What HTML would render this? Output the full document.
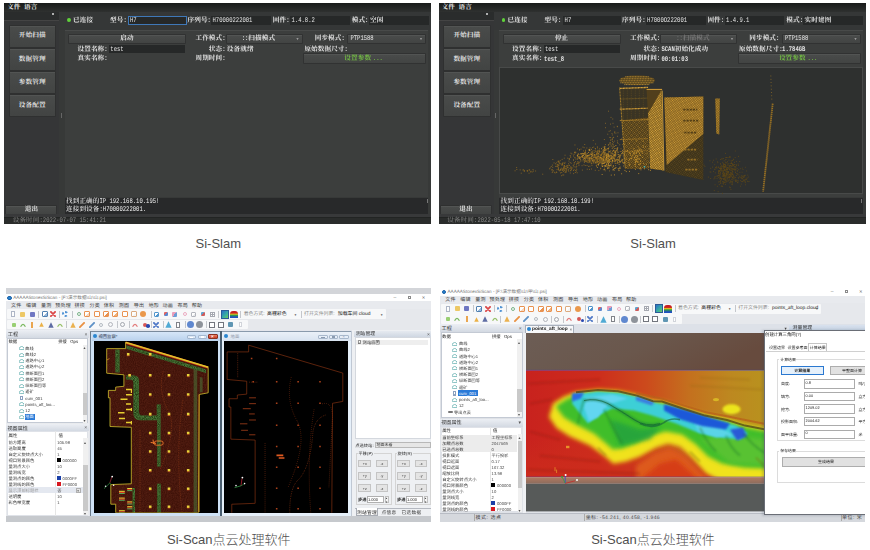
<!DOCTYPE html>
<html lang="zh"><head><meta charset="utf-8"><title>Si-Slam / Si-Scan</title>
<style>
html,body{margin:0;padding:0;background:#fff;}
body{width:870px;height:550px;position:relative;overflow:hidden;font-family:"Liberation Sans","Noto Sans CJK SC",sans-serif;}
div,span,svg{position:absolute;box-sizing:border-box;}
.pan{overflow:hidden;}
.cap{font-size:13px;color:#505050;text-align:center;white-space:nowrap;line-height:16px;height:16px;font-weight:300;}
/* slam */
.sl{text-rendering:geometricPrecision;background:#373938;font-family:"Liberation Serif","Noto Serif CJK SC",serif;font-weight:700;color:#e4e4e4;}
.sl .t{font-size:6.6px;line-height:8px;height:8px;margin-top:-3.7px;white-space:nowrap;letter-spacing:0.1px;}
.sl .l{font-family:"Liberation Mono",monospace;font-style:normal;font-size:5.55px;display:inline-block;transform:scaleY(1.28);transform-origin:50% 60%;font-weight:inherit;letter-spacing:0;}
.sl .r{transform:translateX(-100%);}
.sl .c{transform:translateX(-50%);}
.sl .btn{background:linear-gradient(#494b4a,#424443);border-top:0.5px solid #525453;box-shadow:0 0 0 0.7px #2d2f2e;}
.sl .inp{background:#262828;}

.sc{background:#e9ebee;color:#222;text-rendering:geometricPrecision;}
.sc .t{font-size:4.9px;line-height:6px;height:6px;margin-top:-2.5px;white-space:nowrap;}
.sc .bl{filter:blur(0.3px);}
.sl .bl{filter:blur(0.25px);}
.sc .l{font-style:normal;}
.sc .c{transform:translateX(-50%);}
.sc .r{transform:translateX(-100%);}
.sc .g{color:#8a8a8a;}
</style></head>
<body>
<div class="pan sl" style="left:4px;top:3px;width:427px;height:221px;"><div class="bl" style="left:0;top:0;width:427px;height:221px;"><div style="left:0px;top:0px;width:427px;height:8.5px;background:linear-gradient(#181a19,#2f3130);"></div>
<span class="t" style="left:3px;top:4.6px;color:#e8e8e8;">文件</span>
<span class="t" style="left:20px;top:4.6px;color:#e8e8e8;">语言</span>
<div style="left:0px;top:8.5px;width:55px;height:9px;background:#2a2c2c;border-bottom:0.5px solid #444;"></div>
<div style="left:47.5px;top:10px;width:2.4px;height:2.4px;background:#ddd;border-radius:50%;"></div>
<div style="left:0px;top:17.5px;width:55px;height:196px;background:#353637;"></div>
<div class="btn" style="left:5.5px;top:22.5px;width:45.5px;height:21px;"></div>
<span class="t c" style="left:28.2px;top:33.0px;">开始扫描</span>
<div class="btn" style="left:5.5px;top:45.7px;width:45.5px;height:21px;"></div>
<span class="t c" style="left:28.2px;top:56.2px;">数据管理</span>
<div class="btn" style="left:5.5px;top:68.9px;width:45.5px;height:21px;"></div>
<span class="t c" style="left:28.2px;top:79.4px;">参数管理</span>
<div class="btn" style="left:5.5px;top:92.1px;width:45.5px;height:21px;"></div>
<span class="t c" style="left:28.2px;top:102.6px;">设备配置</span>
<div style="left:56.6px;top:110px;width:0.6px;height:5px;background:#666;"></div>
<div style="left:55px;top:8.5px;width:372px;height:18px;background:#353737;"></div>
<div style="left:63px;top:15.3px;width:3.8px;height:3.8px;background:#5fd03a;border-radius:50%;"></div>
<span class="t" style="left:69px;top:18.1px;">已连接</span>
<span class="t" style="left:106px;top:18px;">型号<i class="l">:</i></span>
<div class="inp" style="left:124.3px;top:13.3px;width:58.4px;height:9px;border:0.7px solid #3f78b8;"></div>
<span class="t" style="left:126px;top:17.8px;font-weight:400;"><i class="l">H7</i></span>
<span class="t" style="left:183.5px;top:18px;">序列号<i class="l">:</i></span>
<div class="inp" style="left:207px;top:13.3px;width:60px;height:9px;"></div>
<span class="t" style="left:208.5px;top:17.8px;font-weight:400;"><i class="l">H70000222001</i></span>
<span class="t" style="left:268.8px;top:18px;">固件<i class="l">:</i></span>
<div class="inp" style="left:286px;top:13.3px;width:59.6px;height:9px;"></div>
<span class="t" style="left:287.5px;top:17.8px;font-weight:400;"><i class="l">1.4.8.2</i></span>
<span class="t" style="left:347.7px;top:18px;">模式<i class="l">:</i></span>
<div class="inp" style="left:364.5px;top:13.3px;width:60px;height:9px;"></div>
<span class="t" style="left:366px;top:18px;">空闲</span>
<div style="left:60.7px;top:26.7px;width:363.8px;height:167px;background:#3c3e3d;border-top:0.5px solid #484a49;"></div>
<div class="btn" style="left:65px;top:31.7px;width:116px;height:8.6px;"></div>
<span class="t c" style="left:123px;top:36px;">启动</span>
<span class="t r" style="left:221.6px;top:36px;">工作模式<i class="l">:</i></span>
<div class="btn" style="left:222.8px;top:31.7px;width:75px;height:8.6px;"></div>
<span class="t c" style="left:254.4px;top:36px;"><i class="l">::</i>扫描模式</span>
<span class="t" style="left:292.5px;top:35.6px;font-size:4px;color:#999;">▾</span>
<span class="t" style="left:310.7px;top:36px;">同步模式<i class="l">:</i></span>
<div class="btn" style="left:344px;top:31.7px;width:77px;height:8.6px;"></div>
<span class="t" style="left:346.4px;top:36px;font-weight:400;"><i class="l">PTP1588</i></span>
<span class="t" style="left:416px;top:35.6px;font-size:4px;color:#999;">▾</span>
<span class="t" style="left:73.5px;top:46.5px;">设置名称<i class="l">:</i></span>
<div class="inp" style="left:105px;top:41.7px;width:76px;height:8.4px;"></div>
<span class="t" style="left:106.3px;top:46.6px;font-weight:400;"><i class="l">test</i></span>
<span class="t r" style="left:221.6px;top:46.5px;">状态<i class="l">:</i></span>
<span class="t" style="left:222.8px;top:46.5px;">设备就绪</span>
<span class="t" style="left:300.4px;top:46.5px;">原始数据尺寸<i class="l">:</i></span>
<span class="t" style="left:343.5px;top:46.5px;"></span>
<span class="t" style="left:73.5px;top:56px;">真实名称<i class="l">:</i></span>
<span class="t" style="left:105.5px;top:56.2px;"></span>
<span class="t r" style="left:221.6px;top:56px;">周期时间<i class="l">:</i></span>
<span class="t" style="left:222.8px;top:56.2px;"></span>
<div class="btn" style="left:300.4px;top:51.3px;width:120.6px;height:8.5px;"></div>
<span class="t c" style="left:359.6px;top:55.7px;color:#74c043;">设置参数 <i class="l">...</i></span>

<div style="left:60.7px;top:195px;width:363.8px;height:16px;background:#28292a;"></div>
<div style="left:422.6px;top:196px;width:0.7px;height:4px;background:#777;"></div>
<span class="t" style="left:62px;top:198.8px;color:#f0f0f0;font-weight:500;">找到正确的<i class="l">IP 192.168.10.195!</i></span>
<span class="t" style="left:62px;top:206.2px;color:#f0f0f0;font-weight:500;">连接到设备<i class="l">:H70000222001.</i></span>
<div class="btn" style="left:2.4px;top:202.6px;width:50px;height:8.2px;"></div>
<span class="t c" style="left:27.4px;top:206.8px;">退出</span>
<div style="left:0px;top:211px;width:427px;height:3px;background:#38393a;"></div>
<div style="left:0px;top:214px;width:427px;height:7px;background:#2a2c2b;border-top:1.3px solid #222423;"></div>
<span class="t" style="left:8.7px;top:218px;color:#8a8a8a;font-weight:400;">设备时间<i class="l">:2022-07-07 15:41:21</i></span></div></div>
<div class="pan sl" style="left:438.6px;top:3px;width:427px;height:221px;"><div class="bl" style="left:0;top:0;width:427px;height:221px;"><div style="left:0px;top:0px;width:427px;height:8.5px;background:linear-gradient(#181a19,#2f3130);"></div>
<span class="t" style="left:3px;top:4.6px;color:#e8e8e8;">文件</span>
<span class="t" style="left:20px;top:4.6px;color:#e8e8e8;">语言</span>
<div style="left:0px;top:8.5px;width:55px;height:9px;background:#2a2c2c;border-bottom:0.5px solid #444;"></div>
<div style="left:47.5px;top:10px;width:2.4px;height:2.4px;background:#ddd;border-radius:50%;"></div>
<div style="left:0px;top:17.5px;width:55px;height:196px;background:#353637;"></div>
<div class="btn" style="left:5.5px;top:22.5px;width:45.5px;height:21px;"></div>
<span class="t c" style="left:28.2px;top:33.0px;">开始扫描</span>
<div class="btn" style="left:5.5px;top:45.7px;width:45.5px;height:21px;"></div>
<span class="t c" style="left:28.2px;top:56.2px;">数据管理</span>
<div class="btn" style="left:5.5px;top:68.9px;width:45.5px;height:21px;"></div>
<span class="t c" style="left:28.2px;top:79.4px;">参数管理</span>
<div class="btn" style="left:5.5px;top:92.1px;width:45.5px;height:21px;"></div>
<span class="t c" style="left:28.2px;top:102.6px;">设备配置</span>
<div style="left:56.6px;top:110px;width:0.6px;height:5px;background:#666;"></div>
<div style="left:55px;top:8.5px;width:372px;height:18px;background:#353737;"></div>
<div style="left:63px;top:15.3px;width:3.8px;height:3.8px;background:#5fd03a;border-radius:50%;"></div>
<span class="t" style="left:69px;top:18.1px;">已连接</span>
<span class="t" style="left:106px;top:18px;">型号<i class="l">:</i></span>
<div class="inp" style="left:124.3px;top:13.3px;width:58.4px;height:9px;"></div>
<span class="t" style="left:126px;top:17.8px;font-weight:400;"><i class="l">H7</i></span>
<span class="t" style="left:183.5px;top:18px;">序列号<i class="l">:</i></span>
<div class="inp" style="left:207px;top:13.3px;width:60px;height:9px;"></div>
<span class="t" style="left:208.5px;top:17.8px;font-weight:400;"><i class="l">H7000O222001</i></span>
<span class="t" style="left:268.8px;top:18px;">固件<i class="l">:</i></span>
<div class="inp" style="left:286px;top:13.3px;width:59.6px;height:9px;"></div>
<span class="t" style="left:287.5px;top:17.8px;font-weight:400;"><i class="l">1.4.9.1</i></span>
<span class="t" style="left:347.7px;top:18px;">模式<i class="l">:</i></span>
<div class="inp" style="left:364.5px;top:13.3px;width:60px;height:9px;"></div>
<span class="t" style="left:366px;top:18px;">实时建图</span>
<div style="left:60.7px;top:26.7px;width:363.8px;height:167px;background:#3c3e3d;border-top:0.5px solid #484a49;"></div>
<div class="btn" style="left:65px;top:31.7px;width:116px;height:8.6px;"></div>
<span class="t c" style="left:123px;top:36px;">停止</span>
<span class="t r" style="left:221.6px;top:36px;">工作模式<i class="l">:</i></span>
<div class="btn" style="left:222.8px;top:31.7px;width:75px;height:8.6px;"></div>
<span class="t c" style="left:254.4px;top:36px;color:#777;"><i class="l">::</i>扫描模式</span>
<span class="t" style="left:292.5px;top:35.6px;font-size:4px;color:#999;">▾</span>
<span class="t" style="left:310.7px;top:36px;">同步模式<i class="l">:</i></span>
<div class="btn" style="left:344px;top:31.7px;width:77px;height:8.6px;"></div>
<span class="t" style="left:346.4px;top:36px;font-weight:400;"><i class="l">PTP1588</i></span>
<span class="t" style="left:416px;top:35.6px;font-size:4px;color:#999;">▾</span>
<span class="t" style="left:73.5px;top:46.5px;">设置名称<i class="l">:</i></span>
<div class="inp" style="left:105px;top:41.7px;width:76px;height:8.4px;"></div>
<span class="t" style="left:106.3px;top:46.6px;font-weight:400;"><i class="l">test</i></span>
<span class="t r" style="left:221.6px;top:46.5px;">状态<i class="l">:</i></span>
<span class="t" style="left:222.8px;top:46.5px;"><i class="l">SCAN</i>初始化成功</span>
<span class="t" style="left:300.4px;top:46.5px;">原始数据尺寸<i class="l">:</i></span>
<span class="t" style="left:343.5px;top:46.5px;"><i class="l">1.784GB</i></span>
<span class="t" style="left:73.5px;top:56px;">真实名称<i class="l">:</i></span>
<span class="t" style="left:105.5px;top:56.2px;"><i class="l">test_8</i></span>
<span class="t r" style="left:221.6px;top:56px;">周期时间<i class="l">:</i></span>
<span class="t" style="left:222.8px;top:56.2px;"><i class="l">00:01:03</i></span>
<div class="btn" style="left:300.4px;top:51.3px;width:120.6px;height:8.5px;"></div>
<span class="t c" style="left:359.6px;top:55.7px;color:#74c043;">设置参数 <i class="l">...</i></span>
<div style="left:60.7px;top:64.4px;width:363.8px;height:127px;background:#2e302f;border:0.5px solid #484a49;"></div><svg viewBox="499.7 67.4 363.8 127" style="left:60.7px;top:64.4px;width:363.8px;height:127px;"><defs><pattern id="pa" width="1.5" height="1.5" patternUnits="userSpaceOnUse" patternTransform="rotate(32)"><rect width="0.95" height="0.95" fill="#e6ad3e"/></pattern><pattern id="pb" width="1.7" height="1.7" patternUnits="userSpaceOnUse" patternTransform="rotate(32)"><rect width="0.8" height="0.8" fill="#b98628"/></pattern><pattern id="pc" width="2" height="1.4" patternUnits="userSpaceOnUse"><rect width="2" height="0.6" fill="#8f6a24"/></pattern></defs><path d="M620 88 L648 88 L649 120 L622.5 122Z" fill="#4a3a18" opacity=".45"/><path d="M624 90V120M628 90V120M632 90V120M636 90V120M640 90V120M644 90V120" stroke="#8a6a24" stroke-width="0.5" opacity=".55" stroke-dasharray="1 0.8"/><path d="M622.5 121 L649 118 L650 169 L626 169.5Z" fill="#5a4316" opacity=".7"/><path d="M622.5 121 L649 118 L650 169 L626 169.5Z" fill="url(#pb)" opacity=".85"/><ellipse cx="637.8" cy="80.6" rx="17.8" ry="5" fill="#5e4718" opacity=".7"/><path d="M626 77.2H650M621.5 79.2H654M620.2 81.2H655.4M621 83.2H654.6M625 85H650" stroke="#d8a238" stroke-width="0.8" stroke-dasharray="1.1 0.5" opacity=".9"/><path d="M620.5 88.8 L649 87.8" stroke="#e6ad3e" stroke-width="1.3" stroke-dasharray="1.1 0.4" fill="none"/><path d="M620.5 99.5 L649 98.5" stroke="#8a6a24" stroke-width="0.6" stroke-dasharray="1.1 0.4" fill="none"/><path d="M620.5 109.6 L649 108.6" stroke="#dca438" stroke-width="1.2" stroke-dasharray="1.1 0.4" fill="none"/><path d="M620.5 121 L649 120" stroke="#c08c2c" stroke-width="0.9" stroke-dasharray="1.1 0.4" fill="none"/><path d="M620.5 140 L649 139" stroke="#b08026" stroke-width="0.8" stroke-dasharray="1.1 0.4" fill="none"/><path d="M620.5 152 L649 151" stroke="#a87a26" stroke-width="0.7" stroke-dasharray="1.1 0.4" fill="none"/><path d="M620.3 88 L626 169" stroke="#b88a2c" stroke-width="0.9" stroke-dasharray="1 0.5" fill="none"/><path d="M647.3 89.6 L662.6 89.6 L664.3 171 L650.8 168.8 L648.5 113Z" fill="#5a4418" opacity=".8"/><path d="M662 91 L664.3 171 L650.8 168.8 L648.8 114Z" fill="#8a6a22" opacity=".6"/><path d="M662 91 L664.3 171 L650.8 168.8 L648.8 114Z" fill="url(#pa)"/><path d="M647.3 89.8 L662.8 89.8" stroke="#d9a238" stroke-width="1"/><path d="M662.9 91 L664.6 171" stroke="#e6ad3e" stroke-width="0.8"/><path d="M665 98 L704 97 L704 180.5 L666 172.5Z" fill="#403418" opacity=".85"/><path d="M665 98 L704 97 L704 134.5 L667.4 165.3 Z" fill="#7e5e20"/><path d="M665 98 L704 97 L704 134.5 L667.4 165.3 Z" fill="url(#pa)" opacity=".78"/><path d="M667.4 166 L704 135.5 L704 180.5 L666 172.5Z" fill="url(#pb)" opacity=".3"/><path d="M684 110h14" stroke="#3a2c10" stroke-width="1.6" stroke-dasharray="2.2 1" opacity=".75"/><path d="M684 121h15" stroke="#3a2c10" stroke-width="1.6" stroke-dasharray="2.2 1" opacity=".75"/><path d="M685 133h12" stroke="#3a2c10" stroke-width="1.6" stroke-dasharray="2.2 1" opacity=".75"/><path d="M685 150h12" stroke="#a87c28" stroke-width="1.8" stroke-dasharray="2.2 1" opacity=".8"/><path d="M688 160h10" stroke="#a87c28" stroke-width="1.8" stroke-dasharray="2.2 1" opacity=".8"/><path d="M686 170h12" stroke="#a87c28" stroke-width="1.8" stroke-dasharray="2.2 1" opacity=".8"/><path d="M716 99 L720.5 99 L720 135 L717 134Z" fill="#7a5c1e"/><path d="M716 99 L720.5 99 L720 135 L717 134Z" fill="url(#pa)" opacity=".6"/><path d="M773.4 104 L763.8 192" stroke="#a07522" stroke-width="1.8" stroke-dasharray="1.3 0.7" fill="none"/><path d="M771.5 76 L772.5 100" stroke="#9a7324" stroke-width="0.8" stroke-dasharray="0.8 2.5" fill="none"/><path d="M594.9 160.6h0.9M595.3 156.4h0.9M586.8 156.9h0.9M611.3 160.1h0.9M610.4 159.2h0.9M602.7 158.9h0.9M578.0 162.3h0.9M604.1 160.5h0.9M577.7 149.3h0.9M587.3 155.7h0.9M601.7 157.8h0.9M604.3 154.8h0.9M601.7 160.0h0.9M590.1 166.6h0.9M604.7 164.0h0.9M590.6 154.3h0.9M593.9 157.5h0.9M605.6 159.2h0.9M592.6 153.2h0.9M591.8 164.1h0.9M588.3 159.2h0.9M603.1 150.6h0.9M598.6 164.5h0.9M573.8 156.4h0.9M596.7 153.9h0.9M604.0 157.7h0.9M580.4 162.1h0.9M606.0 162.7h0.9M615.3 159.8h0.9M599.4 151.5h0.9M605.4 154.9h0.9M592.6 151.7h0.9M586.4 155.3h0.9M613.5 147.8h0.9M580.5 159.2h0.9M615.3 160.9h0.9M575.2 145.4h0.9M602.3 154.3h0.9M584.6 162.9h0.9M611.2 158.8h0.9M600.9 160.2h0.9M617.1 161.1h0.9M604.2 160.7h0.9M579.2 164.4h0.9M609.5 160.6h0.9M574.3 154.8h0.9M608.1 148.9h0.9M595.8 163.1h0.9M582.3 166.1h0.9M604.6 157.2h0.9M601.9 161.2h0.9M599.4 163.7h0.9M590.1 155.9h0.9M610.5 158.1h0.9M587.4 162.7h0.9M615.6 155.8h0.9M581.4 157.3h0.9M596.2 156.5h0.9M614.9 152.9h0.9M613.1 151.7h0.9M588.6 161.2h0.9M611.5 162.3h0.9M602.1 158.7h0.9M599.8 160.9h0.9M595.9 159.4h0.9M604.9 158.0h0.9M607.2 160.8h0.9M622.1 159.6h0.9M592.9 156.1h0.9M597.8 162.6h0.9M594.0 159.9h0.9M620.0 145.2h0.9M584.5 159.2h0.9M602.8 159.2h0.9M592.8 161.3h0.9M601.4 155.4h0.9M627.2 159.8h0.9M591.3 157.5h0.9M595.3 157.7h0.9M565.3 155.6h0.9M610.1 152.2h0.9M597.2 162.8h0.9M608.3 165.5h0.9M577.6 156.2h0.9M593.9 161.1h0.9M611.1 144.6h0.9M611.1 150.8h0.9M606.2 150.5h0.9M600.1 164.0h0.9M596.2 159.0h0.9M607.6 158.7h0.9M596.9 165.7h0.9M610.6 156.5h0.9M630.9 152.3h0.9M609.0 156.7h0.9M599.6 161.5h0.9M600.7 161.2h0.9M579.7 150.5h0.9M605.4 153.2h0.9M585.7 150.6h0.9M613.2 161.7h0.9M615.7 153.3h0.9M598.0 152.3h0.9M607.2 165.9h0.9M587.3 165.8h0.9M609.9 157.1h0.9M574.3 165.0h0.9M596.8 155.0h0.9M602.8 160.0h0.9M616.0 152.9h0.9M611.6 165.4h0.9M615.4 157.1h0.9M589.1 163.1h0.9M599.4 158.6h0.9M615.1 156.7h0.9M570.4 156.1h0.9M575.8 162.1h0.9M601.8 154.9h0.9M597.9 162.2h0.9M598.9 164.6h0.9M597.3 163.2h0.9M615.9 166.0h0.9M589.9 162.4h0.9M575.5 152.6h0.9M574.4 163.3h0.9M583.2 157.9h0.9M595.7 157.9h0.9M590.9 159.2h0.9M619.5 158.2h0.9M604.4 163.0h0.9M595.6 151.7h0.9M591.3 163.4h0.9M578.2 155.0h0.9M610.1 162.0h0.9M598.1 162.0h0.9M600.0 152.1h0.9M579.2 154.8h0.9M609.1 155.2h0.9M587.2 154.1h0.9M579.6 157.4h0.9M583.8 159.8h0.9M569.7 159.6h0.9M590.3 148.3h0.9M606.7 156.6h0.9M571.2 153.6h0.9M601.5 155.7h0.9M607.4 161.7h0.9M606.0 159.6h0.9M614.0 161.3h0.9M603.4 147.6h0.9M608.8 164.5h0.9M594.4 155.7h0.9M621.3 149.2h0.9M603.6 170.1h0.9M586.9 161.4h0.9M620.6 157.4h0.9M604.7 162.5h0.9M587.1 157.6h0.9M601.5 162.1h0.9M597.6 157.0h0.9M585.8 156.2h0.9M608.7 158.5h0.9M587.8 153.8h0.9M630.0 163.7h0.9M605.6 145.0h0.9M605.5 160.4h0.9M618.2 160.1h0.9M597.2 160.6h0.9M574.7 163.2h0.9M601.9 154.5h0.9M613.9 167.0h0.9M581.2 154.7h0.9M601.5 158.9h0.9M593.2 153.1h0.9M623.4 163.2h0.9M583.7 151.3h0.9M618.4 162.9h0.9M619.9 162.1h0.9M587.5 159.3h0.9M572.1 154.3h0.9M597.3 160.6h0.9M589.3 157.4h0.9M603.5 159.9h0.9M605.7 159.0h0.9M594.1 161.9h0.9M598.6 153.9h0.9M590.5 158.0h0.9M596.7 158.8h0.9M598.0 158.9h0.9M596.4 151.7h0.9M603.1 163.3h0.9M603.2 157.1h0.9M603.4 153.2h0.9M575.2 158.3h0.9M586.8 161.7h0.9M585.0 144.9h0.9M585.5 165.9h0.9M593.4 151.2h0.9M588.8 160.6h0.9M604.0 158.9h0.9M615.8 161.5h0.9M597.7 161.0h0.9M617.9 162.9h0.9M610.3 152.6h0.9M596.2 161.6h0.9M594.4 163.3h0.9M605.2 162.5h0.9M595.5 170.7h0.9M612.9 156.9h0.9M599.1 171.0h0.9M593.9 162.4h0.9M609.8 158.0h0.9M584.0 158.9h0.9M602.3 163.6h0.9M607.4 158.1h0.9M608.2 160.7h0.9M600.5 158.3h0.9M595.1 161.4h0.9M585.3 154.9h0.9M598.1 150.7h0.9M592.8 148.0h0.9M589.8 160.8h0.9M604.8 157.7h0.9M595.2 150.9h0.9M619.9 160.6h0.9M611.1 153.6h0.9M595.8 148.9h0.9M607.4 162.7h0.9M575.2 157.7h0.9M605.6 149.2h0.9M576.1 152.7h0.9M590.4 151.0h0.9M598.4 159.2h0.9M605.6 161.5h0.9M616.0 163.8h0.9M582.3 155.5h0.9M585.3 152.6h0.9M597.0 158.0h0.9M603.9 150.1h0.9M583.1 157.9h0.9M595.6 156.4h0.9M597.2 154.2h0.9M606.4 159.8h0.9M596.9 154.6h0.9M595.9 144.4h0.9M586.2 158.2h0.9M580.0 159.0h0.9M599.8 151.1h0.9M595.0 156.4h0.9M603.5 161.1h0.9M597.6 153.7h0.9M596.3 157.7h0.9M606.8 159.5h0.9M589.3 151.2h0.9M593.5 154.3h0.9M584.7 157.4h0.9M592.1 158.5h0.9M604.3 155.9h0.9M625.9 156.4h0.9M611.2 158.6h0.9M611.4 146.1h0.9M589.0 159.2h0.9M605.2 169.7h0.9M601.9 164.4h0.9M607.2 162.7h0.9M604.1 157.2h0.9M604.1 152.6h0.9M612.2 152.9h0.9M601.0 168.6h0.9M595.3 158.1h0.9M612.0 158.1h0.9M588.3 159.3h0.9M605.0 161.6h0.9M588.7 166.8h0.9M618.0 158.1h0.9M601.2 155.9h0.9M615.0 154.5h0.9M606.1 155.6h0.9M589.7 161.6h0.9M614.0 157.9h0.9M589.9 162.1h0.9M597.4 159.6h0.9M616.3 163.7h0.9M591.8 169.4h0.9M598.0 161.9h0.9M590.2 157.8h0.9M577.0 166.9h0.9M614.4 151.9h0.9M579.9 149.9h0.9M612.1 155.7h0.9M597.3 156.4h0.9M596.5 152.6h0.9M598.3 150.8h0.9M597.1 159.5h0.9M603.6 156.8h0.9M587.2 158.8h0.9M592.2 165.8h0.9M607.2 157.4h0.9M592.3 154.5h0.9M586.8 156.2h0.9M601.5 160.6h0.9M604.8 168.5h0.9M589.5 158.1h0.9M631.5 148.7h0.9M591.7 158.8h0.9M599.9 160.0h0.9M595.1 159.8h0.9M598.6 161.9h0.9M575.3 153.6h0.9M598.0 152.8h0.9M585.5 161.1h0.9M590.2 161.2h0.9M606.9 159.5h0.9M604.1 157.5h0.9M581.1 157.8h0.9M603.5 155.4h0.9M596.8 161.7h0.9M587.5 161.2h0.9M620.4 155.2h0.9M599.8 157.2h0.9M616.5 159.6h0.9M608.8 154.5h0.9M597.8 158.0h0.9M576.7 165.2h0.9M608.8 149.3h0.9M606.9 157.3h0.9M603.4 159.8h0.9M580.0 156.9h0.9M615.9 155.1h0.9M585.7 151.2h0.9M583.3 159.7h0.9M618.3 160.1h0.9M600.9 169.2h0.9M591.8 154.6h0.9M604.3 160.7h0.9M585.8 152.2h0.9M601.5 159.2h0.9M582.3 157.0h0.9M591.5 160.3h0.9M596.6 157.6h0.9M593.8 163.3h0.9M614.7 156.2h0.9M608.2 154.2h0.9M598.9 161.7h0.9M616.2 156.1h0.9M597.1 159.0h0.9M580.0 158.1h0.9M589.9 159.9h0.9M584.4 148.1h0.9M598.5 159.3h0.9M591.4 162.4h0.9M594.7 155.0h0.9M603.7 150.2h0.9M589.9 157.9h0.9M608.2 157.2h0.9M601.7 154.7h0.9M601.6 166.3h0.9M589.8 169.8h0.9M590.3 158.1h0.9M600.1 163.1h0.9M583.2 147.5h0.9M605.3 162.0h0.9M605.5 171.2h0.9M600.5 159.3h0.9M609.2 159.8h0.9M618.0 151.8h0.9M593.5 140.8h0.9M607.7 156.1h0.9M609.1 168.8h0.9M597.9 156.7h0.9M592.0 153.8h0.9M590.4 161.2h0.9M598.4 158.3h0.9M595.9 162.6h0.9M603.9 157.3h0.9M606.0 157.2h0.9M584.2 165.3h0.9M603.6 153.2h0.9M610.9 159.7h0.9M579.2 166.0h0.9M602.0 162.5h0.9M600.4 157.3h0.9M579.4 162.9h0.9M598.4 156.6h0.9M602.2 158.4h0.9M606.1 156.1h0.9M597.6 147.3h0.9M592.9 161.4h0.9M614.0 156.2h0.9M596.5 165.9h0.9M594.1 161.7h0.9M618.1 158.2h0.9M612.7 154.4h0.9M600.5 157.6h0.9M599.4 163.6h0.9M626.7 154.7h0.9M591.1 160.5h0.9M585.3 160.5h0.9M604.9 156.6h0.9M604.4 150.3h0.9M607.1 150.3h0.9M589.6 155.2h0.9M593.2 162.3h0.9M599.0 156.0h0.9M604.5 165.9h0.9M598.1 159.8h0.9M612.9 159.3h0.9M582.6 170.5h0.9M624.5 148.1h0.9M597.5 160.1h0.9M609.6 161.3h0.9M594.7 152.7h0.9M599.2 163.2h0.9M584.9 152.9h0.9M597.7 148.3h0.9M594.9 155.8h0.9M603.4 154.5h0.9M587.4 156.0h0.9M597.4 154.7h0.9M598.1 161.8h0.9M612.2 166.5h0.9M588.6 155.9h0.9M568.2 167.5h0.9M589.3 157.8h0.9M604.3 151.2h0.9M603.6 157.9h0.9M576.1 159.5h0.9M612.3 148.7h0.9M607.7 159.0h0.9M603.7 160.2h0.9M613.6 156.9h0.9M608.5 156.0h0.9M606.7 153.9h0.9M596.7 166.7h0.9M603.3 157.2h0.9M584.3 154.0h0.9M600.3 162.7h0.9M603.1 160.6h0.9M597.5 164.8h0.9M593.3 155.3h0.9M608.7 158.3h0.9M594.7 155.1h0.9M594.9 161.1h0.9M602.2 152.0h0.9M603.1 158.9h0.9M586.0 161.9h0.9M594.6 156.3h0.9M607.5 164.6h0.9M589.7 160.2h0.9M587.5 169.6h0.9M592.1 164.0h0.9M590.2 162.1h0.9M624.6 145.3h0.9M592.8 160.5h0.9M596.9 154.7h0.9M623.8 158.4h0.9M578.3 162.3h0.9M577.3 163.8h0.9M591.1 158.7h0.9M613.1 158.6h0.9M581.3 149.5h0.9M612.2 161.7h0.9M588.2 162.3h0.9M604.0 161.2h0.9M570.9 156.5h0.9M608.8 161.7h0.9M608.6 145.7h0.9M600.0 160.5h0.9M628.6 153.2h0.9M594.0 158.2h0.9M608.6 155.8h0.9M611.8 154.1h0.9M601.2 155.4h0.9M599.9 154.5h0.9M578.8 163.5h0.9M601.6 155.2h0.9M600.4 163.0h0.9M586.3 157.4h0.9M604.5 160.6h0.9M594.0 147.5h0.9M612.9 159.6h0.9M598.2 156.6h0.9M601.2 155.9h0.9M585.7 154.3h0.9M590.8 154.9h0.9M584.1 161.2h0.9M582.3 161.3h0.9M585.8 159.8h0.9M614.5 159.0h0.9M589.2 158.2h0.9M599.8 149.3h0.9M590.7 158.8h0.9M592.4 158.4h0.9M606.8 161.8h0.9M608.9 160.9h0.9M594.5 157.9h0.9M594.7 156.4h0.9M595.8 149.4h0.9M594.0 157.9h0.9M586.3 157.9h0.9M604.2 157.2h0.9M622.9 145.0h0.9M595.5 148.9h0.9M609.8 171.3h0.9M568.0 158.6h0.9M604.2 156.5h0.9M604.6 146.8h0.9M608.2 159.9h0.9M598.3 155.1h0.9M605.7 155.6h0.9M600.7 155.4h0.9M571.0 157.8h0.9M600.4 161.8h0.9M587.5 157.8h0.9M605.4 158.7h0.9M612.9 168.0h0.9M587.1 148.4h0.9M608.3 165.6h0.9M609.1 162.1h0.9M590.6 154.4h0.9M533.3 170.0h0.9M517.1 169.9h0.9M543.0 174.6h0.9M523.9 170.3h0.9M529.4 170.3h0.9M535.9 171.4h0.9M521.5 173.6h0.9M524.5 171.9h0.9M527.9 171.0h0.9M529.9 170.4h0.9M516.9 168.0h0.9M520.4 170.3h0.9M527.9 171.6h0.9M531.3 171.7h0.9M523.2 170.4h0.9M515.3 171.2h0.9M530.9 172.3h0.9M527.3 171.2h0.9M533.6 171.5h0.9M532.4 172.4h0.9M529.3 173.6h0.9M524.6 170.9h0.9M557.3 165.3h0.9M573.9 174.0h0.9M563.2 169.9h0.9M571.2 170.7h0.9M571.4 163.7h0.9M558.5 169.5h0.9M573.0 168.4h0.9M557.0 166.8h0.9M558.4 165.1h0.9M573.5 165.9h0.9M563.1 175.4h0.9M571.3 169.1h0.9M558.7 169.4h0.9M574.4 170.1h0.9M571.8 168.3h0.9M566.6 167.3h0.9M566.0 172.4h0.9M553.0 167.8h0.9M564.7 166.1h0.9M560.8 170.7h0.9M577.0 170.1h0.9M565.3 162.7h0.9M576.5 168.3h0.9M562.8 164.2h0.9M562.6 164.3h0.9M563.5 169.6h0.9M563.2 169.0h0.9M557.0 172.9h0.9M558.4 161.8h0.9M561.7 165.4h0.9M555.9 166.8h0.9M565.0 164.0h0.9M562.0 172.9h0.9M567.8 167.5h0.9M563.9 167.6h0.9M562.7 170.5h0.9M562.4 159.8h0.9M562.8 165.0h0.9M567.6 165.9h0.9M564.0 175.4h0.9M555.7 164.2h0.9M553.1 159.9h0.9M549.9 169.2h0.9M558.5 161.6h0.9M552.6 170.1h0.9M557.6 166.8h0.9M565.3 172.6h0.9M576.6 171.5h0.9M564.0 168.6h0.9M575.6 172.9h0.9M560.8 169.6h0.9M565.0 168.2h0.9M559.5 163.5h0.9M559.3 162.7h0.9M571.6 169.8h0.9M554.6 172.7h0.9M569.2 161.5h0.9M575.9 170.8h0.9M577.4 163.8h0.9M566.7 169.4h0.9M564.4 168.6h0.9M570.4 162.9h0.9M554.3 163.3h0.9M559.1 165.9h0.9M565.6 168.9h0.9M563.2 165.7h0.9M559.9 171.2h0.9M568.3 168.3h0.9M560.7 173.3h0.9M558.8 170.2h0.9M571.1 167.1h0.9M568.8 164.2h0.9M570.1 168.7h0.9M551.9 170.3h0.9M556.8 172.4h0.9M558.2 167.4h0.9M565.0 166.9h0.9M564.8 166.1h0.9M567.7 168.0h0.9M564.5 158.6h0.9M571.1 168.1h0.9M550.5 168.3h0.9M566.3 171.6h0.9M555.4 173.3h0.9M561.9 176.1h0.9M562.0 170.3h0.9M560.4 164.2h0.9M570.7 171.1h0.9M573.8 170.9h0.9M559.0 162.3h0.9M558.4 165.7h0.9M557.3 170.0h0.9M565.3 167.1h0.9M564.2 167.5h0.9M564.5 170.6h0.9M569.7 165.7h0.9M552.5 172.9h0.9M563.8 171.8h0.9M551.5 166.9h0.9M563.2 163.1h0.9M559.4 170.5h0.9M570.5 173.4h0.9M557.0 163.2h0.9M566.6 171.2h0.9M564.4 163.6h0.9M568.5 170.7h0.9M566.9 166.3h0.9M565.1 170.7h0.9M559.1 161.7h0.9M565.3 169.6h0.9M563.1 171.0h0.9M558.9 167.7h0.9M560.9 169.9h0.9M574.2 167.1h0.9M577.4 173.2h0.9M568.5 170.0h0.9M575.4 167.4h0.9M562.2 164.4h0.9M566.3 172.6h0.9M566.7 169.4h0.9M561.6 168.6h0.9M553.0 171.6h0.9M560.1 164.2h0.9M557.7 165.2h0.9M569.0 171.6h0.9M553.5 171.1h0.9M569.2 166.0h0.9M552.6 165.5h0.9M558.6 169.2h0.9M560.5 161.1h0.9" stroke="#8f6a22" stroke-width="0.9" fill="none"/><path d="M613.6 150.8h0.9M618.3 152.8h0.9M607.1 154.9h0.9M608.2 167.8h0.9M618.0 163.6h0.9M614.2 150.7h0.9M608.4 156.7h0.9M605.2 163.1h0.9M606.8 155.7h0.9M604.7 147.7h0.9M616.2 168.0h0.9M613.2 154.1h0.9M593.1 161.0h0.9M620.5 161.8h0.9M618.5 168.9h0.9M619.9 157.4h0.9M619.4 164.7h0.9M601.2 157.6h0.9M602.0 159.3h0.9M616.0 153.6h0.9M597.6 167.8h0.9M614.6 168.8h0.9M602.7 166.4h0.9M626.5 172.0h0.9M610.5 161.6h0.9M610.9 166.0h0.9M619.3 160.5h0.9M602.5 164.4h0.9M608.7 163.8h0.9M613.8 169.7h0.9M620.0 157.3h0.9M614.4 170.6h0.9M608.2 162.6h0.9M620.3 167.5h0.9M615.6 152.1h0.9M603.2 161.5h0.9M614.7 175.3h0.9M606.0 166.8h0.9M617.4 150.0h0.9M606.3 161.0h0.9M608.5 159.1h0.9M615.3 155.1h0.9M615.3 156.2h0.9M608.2 163.2h0.9M608.0 161.7h0.9M623.2 160.2h0.9M611.0 164.4h0.9M609.4 166.5h0.9M603.0 163.7h0.9M608.4 155.2h0.9M624.4 154.9h0.9M624.3 163.9h0.9M622.2 154.1h0.9M620.4 168.7h0.9M611.2 159.2h0.9M629.2 161.1h0.9M609.0 156.2h0.9M615.1 162.0h0.9M613.2 170.3h0.9M609.7 162.8h0.9M622.2 154.0h0.9M619.3 171.0h0.9M602.5 153.4h0.9M604.7 148.9h0.9M615.2 148.9h0.9M615.5 168.7h0.9M600.7 158.1h0.9M598.6 164.7h0.9M606.8 158.4h0.9M612.4 163.3h0.9M609.6 160.1h0.9M608.2 160.7h0.9M603.8 160.4h0.9M598.5 157.1h0.9M625.4 160.5h0.9M603.2 161.5h0.9M605.2 150.1h0.9M606.8 164.4h0.9M614.7 159.4h0.9M605.5 153.5h0.9M621.4 161.5h0.9M605.3 147.3h0.9M602.4 174.9h0.9M604.0 159.5h0.9M613.5 159.1h0.9M610.1 151.8h0.9M604.6 170.1h0.9M606.7 165.1h0.9M600.1 158.4h0.9M613.8 166.2h0.9M604.1 163.6h0.9M614.7 155.6h0.9M615.3 154.6h0.9M606.4 159.9h0.9M593.0 159.3h0.9M605.0 151.2h0.9M609.0 164.6h0.9M609.2 167.6h0.9M603.9 152.1h0.9M622.9 162.4h0.9M618.6 155.0h0.9M617.6 161.6h0.9M616.5 160.2h0.9M620.4 156.1h0.9M605.3 151.1h0.9M620.1 155.6h0.9M604.7 154.4h0.9M608.9 152.4h0.9M610.0 156.2h0.9M608.1 154.2h0.9M612.3 157.2h0.9M612.8 161.5h0.9M614.4 146.9h0.9M608.3 155.2h0.9M617.4 150.5h0.9M607.0 158.2h0.9M609.6 165.9h0.9M608.9 165.8h0.9M601.7 149.1h0.9M620.5 162.6h0.9M615.4 160.7h0.9M615.4 152.7h0.9M618.6 156.8h0.9M618.9 160.5h0.9M598.2 152.3h0.9M619.9 159.2h0.9M609.2 161.5h0.9M609.0 156.7h0.9M612.7 160.9h0.9M622.6 160.3h0.9M625.2 170.8h0.9M624.0 166.4h0.9M612.9 160.8h0.9M611.0 155.6h0.9M611.5 156.2h0.9M623.5 163.2h0.9M608.9 148.5h0.9M611.6 157.5h0.9M604.4 153.2h0.9M596.2 163.4h0.9M611.5 175.5h0.9M611.8 159.1h0.9M622.1 160.8h0.9M613.2 157.8h0.9M607.8 169.0h0.9M619.0 170.3h0.9M609.6 160.2h0.9M605.8 165.8h0.9M602.2 163.4h0.9M619.7 168.5h0.9M605.4 166.5h0.9M607.0 155.5h0.9M602.7 166.9h0.9M623.5 156.4h0.9M606.7 158.0h0.9M629.6 166.0h0.9M608.2 149.2h0.9M607.3 167.1h0.9M625.1 158.4h0.9M607.2 156.9h0.9M598.8 165.4h0.9M604.4 166.4h0.9M600.0 152.4h0.9M614.0 155.4h0.9M617.5 160.0h0.9M603.8 163.7h0.9M617.9 148.5h0.9M624.8 163.0h0.9M617.3 148.8h0.9M607.0 157.9h0.9M643.5 147.8h0.9M629.8 143.8h0.9M634.3 160.4h0.9M624.2 153.9h0.9M639.6 169.1h0.9M640.6 155.9h0.9M627.8 151.4h0.9M631.4 159.0h0.9M635.7 169.7h0.9M638.0 150.5h0.9M646.8 164.6h0.9M636.7 153.0h0.9M622.9 150.8h0.9M642.4 152.4h0.9M626.8 159.4h0.9M637.7 162.2h0.9M640.6 167.9h0.9M630.1 164.9h0.9M629.1 162.9h0.9M637.3 159.7h0.9M642.8 157.9h0.9M643.8 164.1h0.9M636.9 154.0h0.9M630.7 154.3h0.9M634.6 157.8h0.9M656.9 162.5h0.9M641.4 152.0h0.9M631.0 155.8h0.9M637.3 150.7h0.9M647.3 154.1h0.9M643.5 141.6h0.9M636.0 159.9h0.9M637.3 162.2h0.9M638.0 159.1h0.9M622.8 153.0h0.9M619.6 162.4h0.9M638.2 156.6h0.9M630.3 153.9h0.9M648.9 170.1h0.9M635.6 167.0h0.9M624.9 144.5h0.9M632.6 151.9h0.9M632.1 159.3h0.9M657.2 153.4h0.9M636.3 159.9h0.9M635.8 164.5h0.9M648.4 149.3h0.9M637.1 156.1h0.9M638.5 147.3h0.9M623.7 141.8h0.9M639.7 159.3h0.9M636.5 141.4h0.9M633.4 152.7h0.9M626.1 151.6h0.9M640.9 161.8h0.9M635.8 161.6h0.9M631.8 158.5h0.9M636.3 161.9h0.9M635.5 157.0h0.9M635.1 153.5h0.9M651.6 161.6h0.9M639.0 174.0h0.9M645.8 147.1h0.9M640.9 163.9h0.9M649.2 167.2h0.9M641.4 149.8h0.9M629.9 159.9h0.9M639.5 150.8h0.9M633.3 155.2h0.9M636.4 160.4h0.9M634.0 149.3h0.9M644.7 169.2h0.9M635.3 165.2h0.9M639.1 162.6h0.9M639.4 152.7h0.9M640.0 165.1h0.9M629.7 171.8h0.9M650.6 170.8h0.9M649.9 163.2h0.9M633.6 153.8h0.9M630.3 158.8h0.9M635.8 162.7h0.9M621.9 174.2h0.9M651.9 157.8h0.9M640.7 161.3h0.9M637.9 156.5h0.9M635.1 152.2h0.9M637.2 157.8h0.9M638.2 152.0h0.9M636.3 158.3h0.9M640.2 150.6h0.9M638.9 164.9h0.9M640.2 155.4h0.9M632.6 156.3h0.9M641.1 168.9h0.9M634.9 153.5h0.9M638.6 159.4h0.9M629.6 152.8h0.9M635.3 162.7h0.9M627.6 150.9h0.9M639.5 149.4h0.9M636.8 160.5h0.9M635.2 150.9h0.9M635.6 155.7h0.9M638.4 152.1h0.9M643.6 146.3h0.9M634.8 158.1h0.9M642.7 153.7h0.9M639.8 154.0h0.9M641.2 170.2h0.9M582.6 157.3h0.9M579.4 158.9h0.9M592.3 156.1h0.9M578.2 157.2h0.9M591.9 159.3h0.9M589.9 150.5h0.9M580.9 160.3h0.9M577.6 159.4h0.9M596.3 158.3h0.9M591.7 155.0h0.9M577.6 155.7h0.9M583.8 155.9h0.9M589.2 155.6h0.9M586.2 157.3h0.9M585.0 161.5h0.9M587.7 156.3h0.9M583.8 154.1h0.9M593.1 156.5h0.9M578.5 154.3h0.9M584.2 154.7h0.9M591.5 152.5h0.9M588.0 156.4h0.9M577.9 156.1h0.9M584.4 157.5h0.9M582.3 156.9h0.9M575.0 152.7h0.9M589.7 159.1h0.9M584.9 154.2h0.9M591.5 149.7h0.9M580.2 158.0h0.9M588.9 152.9h0.9M573.7 160.4h0.9M585.9 153.3h0.9M585.3 158.7h0.9M569.4 159.3h0.9M589.4 149.8h0.9M589.6 150.7h0.9M591.8 157.2h0.9M598.5 154.2h0.9M585.0 159.1h0.9M581.2 153.9h0.9M582.8 155.8h0.9M578.5 157.5h0.9M588.3 156.2h0.9M595.2 155.0h0.9M592.8 154.4h0.9M589.5 150.2h0.9M586.2 155.5h0.9M582.0 154.2h0.9M582.9 153.8h0.9" stroke="#c8942e" stroke-width="0.9" fill="none"/><path d="M712.7 167.5h0.9M723.4 168.1h0.9M720.1 171.0h0.9M732.1 170.1h0.9M723.8 182.2h0.9M733.4 178.9h0.9M734.5 169.5h0.9M726.2 180.4h0.9M723.4 171.1h0.9M729.5 174.8h0.9M725.2 179.4h0.9M725.8 177.4h0.9M734.0 176.9h0.9M731.8 163.3h0.9M718.5 167.4h0.9M730.1 183.3h0.9M719.1 174.3h0.9M721.4 166.5h0.9M725.2 177.2h0.9M728.4 180.8h0.9M720.6 178.7h0.9M733.0 172.5h0.9M730.1 167.8h0.9M719.9 169.0h0.9M722.8 193.7h0.9M723.8 184.4h0.9M728.3 174.3h0.9M731.8 166.2h0.9M733.0 174.8h0.9M717.1 176.5h0.9M730.6 175.4h0.9M737.3 168.9h0.9M730.3 177.6h0.9M721.1 181.0h0.9M717.6 162.2h0.9M730.4 163.8h0.9M726.2 159.7h0.9M727.4 163.5h0.9M729.2 160.5h0.9M729.9 170.0h0.9M727.4 171.5h0.9M727.8 162.1h0.9M710.3 172.3h0.9M720.9 168.6h0.9M729.8 157.1h0.9M722.0 167.4h0.9M720.1 174.5h0.9M726.1 165.8h0.9M720.6 178.1h0.9M722.7 176.4h0.9M729.9 157.8h0.9M720.0 172.0h0.9M729.2 177.8h0.9M732.2 179.8h0.9M724.6 170.4h0.9M732.0 168.8h0.9M733.9 160.1h0.9M731.2 170.7h0.9M714.2 179.3h0.9M729.0 172.2h0.9M720.0 168.5h0.9M736.8 165.8h0.9M704.4 165.6h0.9M719.2 171.0h0.9M724.4 165.2h0.9M721.5 179.9h0.9M717.6 186.7h0.9M723.5 163.8h0.9M732.1 176.2h0.9M720.2 177.6h0.9M715.0 165.1h0.9M734.3 170.1h0.9M718.5 175.9h0.9M733.0 171.8h0.9M715.3 169.4h0.9M729.7 177.8h0.9M739.0 170.1h0.9M723.9 171.7h0.9M734.8 164.9h0.9M735.5 151.4h0.9M732.2 166.9h0.9M730.0 177.2h0.9M719.3 171.4h0.9M728.6 176.4h0.9M721.0 164.6h0.9M714.5 191.0h0.9M725.7 170.3h0.9M717.3 179.0h0.9M723.5 182.8h0.9M732.5 172.2h0.9M731.7 163.7h0.9M724.9 167.7h0.9M718.7 172.1h0.9M726.1 182.8h0.9M705.2 167.0h0.9M721.0 168.5h0.9M729.7 175.0h0.9M727.2 168.4h0.9M730.2 174.7h0.9M715.0 170.0h0.9M718.1 163.1h0.9M728.0 172.5h0.9M727.7 165.4h0.9M725.7 165.2h0.9M729.5 177.2h0.9M738.4 181.5h0.9M721.8 168.6h0.9M720.9 174.3h0.9M739.9 177.3h0.9M712.7 162.6h0.9M718.6 175.9h0.9M727.0 174.2h0.9M738.6 165.8h0.9M721.5 186.7h0.9M729.2 166.2h0.9M713.8 160.6h0.9M711.1 172.5h0.9M727.3 179.4h0.9M726.1 166.8h0.9M722.2 186.3h0.9M715.5 173.3h0.9M727.2 176.6h0.9M724.4 175.7h0.9M732.3 170.9h0.9M724.0 170.6h0.9M720.7 170.4h0.9M725.0 173.6h0.9M735.7 181.8h0.9M724.1 176.5h0.9M728.9 177.7h0.9M727.1 174.0h0.9M724.0 166.1h0.9M732.7 181.7h0.9M731.3 175.3h0.9M728.7 168.6h0.9M715.4 177.0h0.9M728.3 167.8h0.9M720.7 181.6h0.9M715.3 185.2h0.9M731.2 189.8h0.9M722.3 171.8h0.9M723.7 173.2h0.9M725.6 166.4h0.9M734.0 166.1h0.9M723.7 176.2h0.9M723.5 168.7h0.9M729.3 169.2h0.9M718.9 171.2h0.9M725.6 184.8h0.9M719.9 179.3h0.9M721.9 169.3h0.9M724.9 174.0h0.9M732.6 185.1h0.9M722.9 182.0h0.9M733.5 178.1h0.9M722.1 178.8h0.9M726.3 174.6h0.9M725.3 177.0h0.9M734.2 180.5h0.9M725.7 179.5h0.9M736.4 165.0h0.9M736.6 162.0h0.9M730.5 176.5h0.9M736.6 174.1h0.9M723.9 166.0h0.9M718.9 177.7h0.9M725.5 166.6h0.9M730.5 166.3h0.9M724.2 168.6h0.9M737.8 183.0h0.9M726.0 160.2h0.9M728.8 172.5h0.9M729.3 176.2h0.9M724.9 178.9h0.9M732.4 173.6h0.9M724.4 168.4h0.9M731.5 163.8h0.9M726.0 166.4h0.9M717.9 176.5h0.9M726.8 172.3h0.9M732.7 160.8h0.9M726.6 174.2h0.9M732.4 163.9h0.9M731.7 173.6h0.9M735.8 180.5h0.9M730.6 188.1h0.9M727.0 168.8h0.9M724.8 164.9h0.9M726.8 157.9h0.9M726.5 175.2h0.9M733.4 169.4h0.9M736.0 167.1h0.9M726.1 157.9h0.9M722.1 166.1h0.9M736.5 175.9h0.9M720.0 175.9h0.9M730.1 170.3h0.9M727.1 169.8h0.9M723.6 159.0h0.9M726.4 181.4h0.9M736.1 170.0h0.9M722.3 170.5h0.9M732.7 174.6h0.9M723.3 174.7h0.9M725.7 175.8h0.9M724.4 161.2h0.9M727.4 177.6h0.9M720.0 171.2h0.9M732.6 169.3h0.9M722.9 186.8h0.9M732.3 179.5h0.9M721.0 183.9h0.9M716.5 168.2h0.9M731.7 181.7h0.9M721.1 167.2h0.9M728.2 157.9h0.9M731.0 176.1h0.9M724.2 175.9h0.9M731.9 174.3h0.9M730.3 183.0h0.9M724.0 173.2h0.9M723.7 179.5h0.9M724.4 175.5h0.9M727.9 172.5h0.9M737.8 171.4h0.9M735.9 178.0h0.9M735.3 170.8h0.9M732.8 177.5h0.9M723.1 174.0h0.9M726.2 171.7h0.9M735.2 166.8h0.9M716.4 159.4h0.9M724.2 167.3h0.9M727.1 176.1h0.9M738.0 174.2h0.9M729.9 166.7h0.9M730.6 181.8h0.9M735.4 157.9h0.9M732.6 183.5h0.9M732.2 161.2h0.9M725.1 176.2h0.9M729.6 166.1h0.9M721.4 179.0h0.9M718.6 182.4h0.9M727.1 174.2h0.9M718.7 167.7h0.9M731.3 161.4h0.9M740.0 161.9h0.9M719.4 172.3h0.9M730.0 177.3h0.9M724.7 170.5h0.9M725.5 167.9h0.9M710.9 178.9h0.9M728.6 173.1h0.9M723.1 173.8h0.9M726.9 171.4h0.9M733.9 159.6h0.9M728.6 164.3h0.9M725.0 182.8h0.9M720.2 171.3h0.9M723.3 178.8h0.9M720.9 159.9h0.9M730.2 169.4h0.9M725.0 179.8h0.9M721.5 169.3h0.9M727.9 175.0h0.9M723.8 179.5h0.9M741.0 169.1h0.9M738.7 156.8h0.9M735.8 169.5h0.9M727.9 169.6h0.9M723.0 162.8h0.9M724.5 181.3h0.9M734.1 169.5h0.9M723.7 166.9h0.9M719.5 185.0h0.9M731.1 172.8h0.9M723.9 164.6h0.9M735.2 177.6h0.9M721.1 179.1h0.9M720.1 176.6h0.9M721.0 169.0h0.9M730.1 175.1h0.9M733.3 166.0h0.9M736.9 181.7h0.9M726.9 175.3h0.9M722.1 170.9h0.9M718.8 172.6h0.9M728.2 181.7h0.9M732.9 177.9h0.9M724.7 170.4h0.9M724.9 173.6h0.9M715.0 177.6h0.9M717.2 168.3h0.9M727.1 168.3h0.9M737.4 171.3h0.9M736.8 180.5h0.9M723.9 174.9h0.9M735.1 169.6h0.9M727.6 168.0h0.9M727.4 169.5h0.9M727.5 179.2h0.9M735.7 173.0h0.9M728.3 178.2h0.9M725.2 164.4h0.9M733.9 165.3h0.9M732.8 165.1h0.9M738.4 164.5h0.9M732.3 182.8h0.9M721.0 182.7h0.9M721.9 159.3h0.9M731.5 177.1h0.9M725.7 153.8h0.9M726.7 169.8h0.9M724.6 169.9h0.9M715.8 167.9h0.9M738.2 183.1h0.9M724.7 166.9h0.9M729.5 179.6h0.9M731.5 163.6h0.9M728.0 173.0h0.9M736.0 180.6h0.9M730.3 180.8h0.9M724.5 183.1h0.9M724.3 174.8h0.9M732.7 165.4h0.9M722.6 159.3h0.9M728.0 171.6h0.9M725.0 175.6h0.9M713.8 171.8h0.9M727.5 170.1h0.9M732.0 184.6h0.9M724.2 165.2h0.9M723.2 172.7h0.9M730.7 165.8h0.9M733.2 164.6h0.9M732.2 175.1h0.9M729.9 187.5h0.9M725.4 170.8h0.9M730.0 178.2h0.9M718.6 174.0h0.9M722.4 176.5h0.9M735.5 172.4h0.9M726.3 173.3h0.9M708.6 177.5h0.9M730.5 173.2h0.9M724.5 166.7h0.9M725.9 180.7h0.9M726.4 181.7h0.9M711.0 168.7h0.9M728.7 171.9h0.9M716.6 167.2h0.9M734.8 162.7h0.9M720.8 164.1h0.9M723.6 176.6h0.9M730.7 157.4h0.9M736.1 167.7h0.9M723.3 184.0h0.9M726.5 163.1h0.9M723.0 166.8h0.9M720.7 169.6h0.9M732.5 174.5h0.9M718.4 192.1h0.9M720.8 172.8h0.9M727.2 177.5h0.9M725.0 175.3h0.9M740.1 172.7h0.9M720.2 174.4h0.9M722.0 169.3h0.9M728.2 174.4h0.9M725.2 178.1h0.9M725.8 162.6h0.9M732.5 169.4h0.9M734.6 167.3h0.9M730.6 174.3h0.9M710.2 161.2h0.9M720.0 182.1h0.9M715.2 178.6h0.9M733.8 175.6h0.9M731.2 168.4h0.9M744.0 181.0h0.8M745.6 183.1h0.8M743.2 177.0h0.8M741.8 181.8h0.8M737.6 174.6h0.8M742.4 177.6h0.8M743.0 168.5h0.8M742.7 178.9h0.8M747.0 171.4h0.8M742.8 182.1h0.8M745.9 185.2h0.8M748.1 175.5h0.8M746.4 178.6h0.8M740.9 186.6h0.8M741.6 176.3h0.8M742.4 176.3h0.8M747.9 181.6h0.8M749.4 181.8h0.8M741.6 184.5h0.8M741.5 178.0h0.8M743.4 180.2h0.8M748.6 177.4h0.8M745.4 179.9h0.8M739.2 175.3h0.8M743.2 181.8h0.8M745.2 182.1h0.8M744.2 178.1h0.8M745.6 175.7h0.8M738.8 178.6h0.8M738.5 177.8h0.8M741.1 177.6h0.8M743.8 176.5h0.8M742.4 172.6h0.8M744.6 176.2h0.8M745.6 167.7h0.8M740.9 181.1h0.8M734.6 178.4h0.8M744.4 180.4h0.8M738.2 181.0h0.8M744.6 175.8h0.8M746.9 179.8h0.8M744.1 178.0h0.8M746.1 180.4h0.8M748.4 182.0h0.8M741.6 179.0h0.8M747.5 178.4h0.8M745.5 182.3h0.8M743.3 169.9h0.8M744.5 180.9h0.8M744.5 176.7h0.8" stroke="#5e4718" stroke-width="0.9" fill="none"/><path d="M617.7 136.7h0.8M610.6 131.1h0.8M614.4 127.5h0.8M609.1 157.3h0.8M618.1 148.2h0.8M618.3 143.8h0.8M606.5 149.6h0.8M617.8 142.7h0.8M605.4 150.0h0.8M618.3 133.2h0.8M613.5 145.5h0.8M612.7 148.6h0.8M613.3 144.7h0.8M613.3 123.7h0.8M609.1 168.7h0.8M614.1 150.7h0.8M617.4 154.6h0.8M615.1 132.2h0.8M613.1 119.4h0.8M612.3 146.8h0.8M604.6 139.9h0.8M616.2 150.9h0.8M609.4 131.7h0.8M605.7 128.1h0.8M615.1 158.1h0.8M608.6 151.4h0.8M614.7 133.2h0.8M621.5 113.5h0.8M612.7 140.1h0.8M621.3 155.5h0.8M621.8 139.3h0.8M616.8 151.3h0.8M615.0 141.5h0.8M612.3 134.0h0.8M608.2 156.9h0.8M611.3 117.8h0.8M614.0 137.7h0.8M613.7 155.6h0.8M612.6 135.4h0.8M610.1 137.8h0.8M611.3 140.0h0.8M625.1 141.8h0.8M609.7 156.8h0.8M616.4 145.9h0.8M615.8 146.0h0.8M615.6 151.7h0.8M616.9 151.1h0.8M611.0 138.0h0.8M610.2 147.3h0.8M616.2 133.5h0.8M615.3 163.6h0.8M617.8 127.1h0.8M612.6 144.2h0.8M612.9 141.8h0.8M617.6 141.2h0.8M608.7 145.0h0.8M612.6 139.1h0.8M610.8 124.5h0.8M608.1 134.6h0.8M608.8 111.6h0.8M617.5 126.7h0.8M610.2 143.2h0.8M603.6 151.1h0.8M610.0 144.4h0.8M611.1 141.0h0.8M613.4 138.0h0.8M605.9 123.7h0.8M612.8 151.7h0.8M610.9 143.2h0.8M613.6 142.7h0.8" stroke="#a67b28" stroke-width="0.8" fill="none"/><rect x="644.5" y="166.5" width="1.4" height="1.4" fill="#3fc1c9"/></svg>
<div style="left:60.7px;top:195px;width:363.8px;height:16px;background:#28292a;"></div>
<div style="left:422.6px;top:196px;width:0.7px;height:4px;background:#777;"></div>
<span class="t" style="left:62px;top:198.8px;color:#f0f0f0;font-weight:500;">找到正确的<i class="l">IP 192.168.10.199!</i></span>
<span class="t" style="left:62px;top:206.2px;color:#f0f0f0;font-weight:500;">连接到设备<i class="l">:H7000O222001.</i></span>
<div class="btn" style="left:2.4px;top:202.6px;width:50px;height:8.2px;"></div>
<span class="t c" style="left:27.4px;top:206.8px;">退出</span>
<div style="left:0px;top:211px;width:427px;height:3px;background:#38393a;"></div>
<div style="left:0px;top:214px;width:427px;height:7px;background:#2a2c2b;border-top:1.3px solid #222423;"></div>
<span class="t" style="left:8.7px;top:218px;color:#8a8a8a;font-weight:400;">设备时间<i class="l">:2022-05-18 17:47:10</i></span></div></div>
<div class="pan sc" style="left:5.9px;top:287.9px;width:425px;height:233.9px;"><div class="bl" style="left:-5.9px;top:-287.9px;width:870px;height:550px;"><div style="left:5.9px;top:287.9px;width:425px;height:5.8px;background:#d3d5d9;"></div>
<div style="left:5.9px;top:293.6px;width:425px;height:7.8px;background:#fff;"></div>
<div style="left:7.2px;top:295.6px;width:4.4px;height:4.4px;background:#2a86d0;border-radius:50%;border:0.8px solid #1a5fa8;"></div>
<span class="t" style="left:13.2px;top:297.7px;color:#777;font-size:4.6px;"><i class="l">AAAAAStonexSiScan - [F:\</i>演示数据<i class="l">\</i>山<i class="l">\</i>山<i class="l">.psi]</i></span>
<span class="t" style="left:393.5px;top:297.4px;color:#777;font-size:5px;">–</span>
<div style="left:407.8px;top:295.9px;width:3.2px;height:3.2px;border:0.5px solid #8a8a8a;"></div>
<span class="t" style="left:421.8px;top:297.4px;color:#666;font-size:4.2px;">✕</span>
<div style="left:5.9px;top:301.3px;width:425px;height:7.6px;background:#e8eaee;"></div>
<span class="t" style="left:10.9px;top:305.3px;letter-spacing:0.25px;color:#3a3a3a;font-size:5px;">文件</span>
<span class="t" style="left:25.9px;top:305.3px;letter-spacing:0.25px;color:#3a3a3a;font-size:5px;">编辑</span>
<span class="t" style="left:41px;top:305.3px;letter-spacing:0.25px;color:#3a3a3a;font-size:5px;">量测</span>
<span class="t" style="left:55.2px;top:305.3px;letter-spacing:0.25px;color:#3a3a3a;font-size:5px;">预处理</span>
<span class="t" style="left:74.4px;top:305.3px;letter-spacing:0.25px;color:#3a3a3a;font-size:5px;">拼接</span>
<span class="t" style="left:89.5px;top:305.3px;letter-spacing:0.25px;color:#3a3a3a;font-size:5px;">分类</span>
<span class="t" style="left:103.7px;top:305.3px;letter-spacing:0.25px;color:#3a3a3a;font-size:5px;">体积</span>
<span class="t" style="left:118.7px;top:305.3px;letter-spacing:0.25px;color:#3a3a3a;font-size:5px;">测图</span>
<span class="t" style="left:133.8px;top:305.3px;letter-spacing:0.25px;color:#3a3a3a;font-size:5px;">导出</span>
<span class="t" style="left:148.4px;top:305.3px;letter-spacing:0.25px;color:#3a3a3a;font-size:5px;">地形</span>
<span class="t" style="left:162.6px;top:305.3px;letter-spacing:0.25px;color:#3a3a3a;font-size:5px;">动画</span>
<span class="t" style="left:177.6px;top:305.3px;letter-spacing:0.25px;color:#3a3a3a;font-size:5px;">布局</span>
<span class="t" style="left:191.8px;top:305.3px;letter-spacing:0.25px;color:#3a3a3a;font-size:5px;">帮助</span>
<div style="left:5.9px;top:308.9px;width:425px;height:10.7px;background:#e6e8ec;"></div>
<div style="left:7px;top:309.3px;width:379px;height:10px;background:#f7f8f9;border-radius:1px;"></div>
<div style="opacity:.88;left:11.0px;top:311.0px;width:4px;height:6px;background:#fff;border:0.6px solid #a4aec0;"></div>
<div style="opacity:.88;left:20.0px;top:312.0px;width:5px;height:5px;background:#ecc050;border-radius:1px;"></div>
<div style="opacity:.88;left:30.0px;top:312.0px;width:5px;height:5px;background:#5c64ba;border-radius:1px;"></div>
<div style="opacity:.88;left:42.0px;top:311.0px;width:6px;height:6px;background:linear-gradient(135deg,#fff 55%,#8ab0d8 55%);border:1px solid #3a70a8;border-radius:1px;"></div>
<svg style="opacity:.88;left:50.0px;top:311.0px;width:6px;height:6px" viewBox="0 0 10 10"><path d="M1.5 1.5L8.5 8.5M8.5 1.5L1.5 8.5" stroke="#d83030" stroke-width="3" stroke-linecap="round"/></svg>
<div style="opacity:.88;left:62.0px;top:311.0px;width:6px;height:6px;border:2px dotted #3a86d0;border-radius:50%;background:#fff;"></div>
<div style="opacity:.88;left:77.0px;top:312.0px;width:4px;height:4px;border:1.4px solid #6aaa7a;border-radius:50%;"></div>
<div style="opacity:.88;left:84.0px;top:311.0px;width:6px;height:6px;background:linear-gradient(135deg,#fff 55%,#f6d4b8 55%);border:1px solid #e8853a;border-radius:1px;"></div>
<div style="opacity:.88;left:94.0px;top:311.0px;width:6px;height:6px;background:linear-gradient(135deg,#fff 55%,#fff 55%);border:1px solid #e8853a;border-radius:1px;"></div>
<div style="opacity:.88;left:103.0px;top:311.0px;width:6px;height:6px;background:linear-gradient(135deg,#fff 55%,#e8853a 55%);border:1px solid #e8853a;border-radius:1px;"></div>
<div style="opacity:.88;left:112.0px;top:311.0px;width:6px;height:6px;background:linear-gradient(135deg,#fff 55%,#f0a868 55%);border:1px solid #e8853a;border-radius:1px;"></div>
<div style="opacity:.88;left:122.0px;top:311.0px;width:6px;height:6px;background:linear-gradient(135deg,#fff 55%,#fff 55%);border:1px solid #e8853a;border-radius:1px;"></div>
<div style="opacity:.88;left:131.0px;top:311.0px;width:6px;height:6px;background:linear-gradient(135deg,#fff 55%,#f4f4f4 55%);border:1px solid #d8a070;border-radius:1px;"></div>
<div style="opacity:.88;left:140.0px;top:311.0px;width:6px;height:6px;background:#e88a32;border-radius:50%;"></div>
<div style="opacity:.88;left:154.0px;top:312.0px;width:5px;height:5px;background:linear-gradient(135deg,#fff 55%,#3a88c8 55%);border:1px solid #3a88c8;border-radius:1px;"></div>
<div style="opacity:.88;left:164.0px;top:312.0px;width:4px;height:4px;background:linear-gradient(135deg,#d85050 50%,#4a78c8 50%);border-radius:1px;"></div>
<div style="opacity:.88;left:172.0px;top:312.0px;width:5px;height:5px;background:linear-gradient(135deg,#e890b0 50%,#5a90d0 50%);border-radius:1px;"></div>
<div style="opacity:.88;left:183.0px;top:312.0px;width:4px;height:4px;border:1.4px solid #e8a0b8;border-radius:50%;"></div>
<div style="opacity:.88;left:191.0px;top:312.0px;width:5px;height:5px;background:linear-gradient(135deg,#fff 55%,#e4e6ea 55%);border:1px solid #a8acb4;border-radius:1px;"></div>
<div style="opacity:.88;left:201.0px;top:312.0px;width:4px;height:4px;background:linear-gradient(135deg,#4a98c8 50%,#c84848 50%);border-radius:1px;"></div>
<div style="opacity:.88;left:210.0px;top:312.0px;width:5px;height:5px;border:0.7px solid #9a9ea6;background:linear-gradient(90deg,transparent 45%,#9a9ea6 45%,#9a9ea6 58%,transparent 58%),linear-gradient(transparent 45%,#9a9ea6 45%,#9a9ea6 58%,transparent 58%),#fff;"></div>
<div style="left:38.4px;top:310.9px;width:0.6px;height:7px;background:#c4c7cc;"></div>
<div style="left:59.4px;top:310.9px;width:0.6px;height:7px;background:#c4c7cc;"></div>
<div style="left:72px;top:310.9px;width:0.6px;height:7px;background:#c4c7cc;"></div>
<div style="left:150.7px;top:310.9px;width:0.6px;height:7px;background:#c4c7cc;"></div>
<div style="left:217.8px;top:310.9px;width:0.6px;height:7px;background:#c4c7cc;"></div>
<div style="left:240.3px;top:310.9px;width:0.6px;height:7px;background:#c4c7cc;"></div>
<div style="left:220.6px;top:310.2px;width:8px;height:8.4px;background:linear-gradient(135deg,#2a70c8,#38b0a0 60%,#78c850);border:0.5px solid #2a5a98;"></div>
<div style="left:229.8px;top:310.59999999999997px;width:8px;height:7.8px;background:linear-gradient(#c82020 30%,#e8c020 45%,#30a040 60%,#2050c0 85%);border-radius:3px 3px 0 0;"></div>
<span class="t g" style="left:243.7px;top:314.4px;">着色方式<i class="l">:</i></span>
<span class="t" style="left:267px;top:314.4px;color:#111;">高程彩色</span>
<span class="t" style="left:294.5px;top:314.4px;font-size:3.6px;color:#555;">▾</span>
<div style="left:300.6px;top:310.9px;width:0.6px;height:7px;background:#c4c7cc;"></div>
<span class="t g" style="left:304px;top:314.4px;">打开文件列表<i class="l">:</i></span>
<span class="t" style="left:337.8px;top:314.4px;color:#111;">加载车间 <i class="l">cloud</i></span>
<span class="t" style="left:380.8px;top:314.4px;font-size:3.6px;color:#555;">▾</span>
<div style="left:5.9px;top:319.6px;width:425px;height:10.2px;background:#e6e8ec;"></div>
<div style="left:7px;top:319.9px;width:240.5px;height:9.6px;background:#f7f8f9;border-radius:1px;"></div>
<div style="opacity:.88;left:12.0px;top:323.0px;width:4px;height:4px;background:#8cc860;border-radius:1px;"></div>
<svg style="opacity:.88;left:20.0px;top:322.0px;width:6px;height:6px" viewBox="0 0 10 10"><path d="M1 8Q5 0 9 8" stroke="#68b048" stroke-width="2" fill="none"/></svg>
<div style="opacity:.88;left:31.4px;top:322.0px;width:1.3px;height:6px;background:#e89a38;"></div>
<svg style="opacity:.88;left:39.0px;top:322.0px;width:5px;height:5px" viewBox="0 0 10 10"><path d="M5 0.5L9.5 9.5H0.5Z" fill="#eaa830"/></svg>
<svg style="opacity:.88;left:48.0px;top:322.0px;width:6px;height:6px" viewBox="0 0 10 10"><path d="M5 0.5L9.5 9.5H0.5Z" fill="#4a5a98"/></svg>
<svg style="opacity:.88;left:57.0px;top:322.0px;width:6px;height:6px" viewBox="0 0 10 10"><path d="M1 8Q5 0 9 8" stroke="#88b850" stroke-width="2" fill="none"/></svg>
<svg style="opacity:.88;left:70.0px;top:322.0px;width:6px;height:6px" viewBox="0 0 10 10"><path d="M5 0.5L9.5 9.5H0.5Z" fill="#eaa838"/></svg>
<svg style="opacity:.88;left:79.0px;top:322.0px;width:6px;height:6px" viewBox="0 0 10 10"><path d="M1.5 8.5L8.5 1.5" stroke="#e8842a" stroke-width="3" stroke-linecap="round"/></svg>
<svg style="opacity:.88;left:89.0px;top:322.0px;width:6px;height:6px" viewBox="0 0 10 10"><path d="M1.5 8.5L8.5 1.5" stroke="#4a84c0" stroke-width="3" stroke-linecap="round"/></svg>
<div style="opacity:.88;left:99.0px;top:323.0px;width:4px;height:4px;border:1.4px solid #a8b0b8;border-radius:50%;"></div>
<div style="opacity:.88;left:108.0px;top:322.0px;width:5px;height:5px;border:1.4px solid #a8acb4;border-radius:50%;"></div>
<div style="opacity:.88;left:120.0px;top:322.0px;width:5px;height:5px;border:1.4px solid #989ca4;border-radius:50%;"></div>
<svg style="opacity:.88;left:132.0px;top:322.0px;width:6px;height:6px" viewBox="0 0 10 10"><path d="M1 8Q5 0 9 8" stroke="#e06868" stroke-width="2" fill="none"/></svg>
<div style="opacity:.88;left:143.0px;top:323.0px;width:4px;height:4px;background:#d04040;border-radius:50%;"></div>
<svg style="opacity:.88;left:153.0px;top:322.0px;width:6px;height:6px" viewBox="0 0 10 10"><path d="M1.5 1.5L8.5 8.5M8.5 1.5L1.5 8.5" stroke="#3a68c0" stroke-width="3" stroke-linecap="round"/></svg>
<svg style="opacity:.88;left:165.0px;top:321.0px;width:7px;height:7px" viewBox="0 0 10 10"><path d="M5 0.5L9.5 9.5H0.5Z" fill="#3aa0d0"/></svg>
<div style="opacity:.88;left:176.0px;top:322.0px;width:4px;height:6px;background:#fff;border:0.6px solid #70747a;"></div>
<div style="opacity:.88;left:187.0px;top:321.0px;width:7px;height:7px;background:#4a78c8;border-radius:50%;"></div>
<div style="opacity:.88;left:196.0px;top:321.0px;width:7px;height:7px;background:#80848c;border-radius:50%;"></div>
<div style="opacity:.88;left:209.0px;top:322.0px;width:6px;height:6px;border:0.7px solid #60646c;background:linear-gradient(90deg,transparent 45%,#60646c 45%,#60646c 58%,transparent 58%),linear-gradient(transparent 45%,#60646c 45%,#60646c 58%,transparent 58%),#fff;"></div>
<div style="opacity:.88;left:218.0px;top:322.0px;width:6px;height:6px;border:0.7px solid #60646c;background:linear-gradient(90deg,transparent 45%,#60646c 45%,#60646c 58%,transparent 58%),linear-gradient(transparent 45%,#60646c 45%,#60646c 58%,transparent 58%),#fff;"></div>
<div style="opacity:.88;left:228.0px;top:322.0px;width:5px;height:5px;background:#4a88a8;border-radius:1px;"></div>
<div style="opacity:.88;left:239.0px;top:322.0px;width:3px;height:5px;background:#fff;border:0.6px solid #ccd0d6;"></div>
<div style="left:146.2px;top:324.29999999999995px;width:3.6px;height:3.6px;background:#2848b0;border-radius:50%;"></div>
<div style="left:66px;top:321.4px;width:0.6px;height:7px;background:#c4c7cc;"></div>
<div style="left:117px;top:321.4px;width:0.6px;height:7px;background:#c4c7cc;"></div>
<div style="left:129px;top:321.4px;width:0.6px;height:7px;background:#c4c7cc;"></div>
<div style="left:150.5px;top:321.4px;width:0.6px;height:7px;background:#c4c7cc;"></div>
<div style="left:162.5px;top:321.4px;width:0.6px;height:7px;background:#c4c7cc;"></div>
<div style="left:184.6px;top:321.4px;width:0.6px;height:7px;background:#c4c7cc;"></div>
<div style="left:206px;top:321.4px;width:0.6px;height:7px;background:#c4c7cc;"></div>
<div style="left:5.9px;top:329.8px;width:425px;height:0.5px;background:#aab0ba;"></div>
<div style="left:88.6px;top:330.2px;width:266px;height:186px;background:#e4e6ec;"></div>
<div style="left:5.9px;top:330.2px;width:82.69999999999999px;height:7.800000000000011px;background:linear-gradient(#eceff4,#d3d9e2);"></div>
<span class="t" style="left:7.800000000000001px;top:334.3px;color:#333;font-size:5.2px;">工程</span>
<span class="t" style="left:84.39999999999999px;top:334.1px;color:#555;font-size:5px;">×</span>
<div style="left:7.0px;top:338px;width:81.29999999999998px;height:85.19999999999999px;background:#fff;border:0.5px solid #c4cad4;"></div>
<span class="t" style="left:8.4px;top:341.7px;font-size:4.4px;">数据</span>
<span class="t" style="left:58.199999999999996px;top:341.7px;font-size:4.4px;">拼接</span>
<span class="t" style="left:70.2px;top:341.7px;font-size:4.4px;"><i class="l">Gps</i></span>
<svg style="left:18.6px;top:346.3px;width:5.2px;height:4px" viewBox="0 0 13 10"><path d="M3 9a2.6 2.6 0 0 1 0-5.2a3.6 3.6 0 0 1 7-.4a2.8 2.8 0 0 1 0 5.6Z" fill="#fff" stroke="#3a9a9a" stroke-width="1.6"/></svg>
<span class="t" style="left:25.299999999999997px;top:348.3px;color:#3c3c3c;font-size:4.2px;">曲线</span>
<svg style="left:18.6px;top:352.52000000000004px;width:5.2px;height:4px" viewBox="0 0 13 10"><path d="M3 9a2.6 2.6 0 0 1 0-5.2a3.6 3.6 0 0 1 7-.4a2.8 2.8 0 0 1 0 5.6Z" fill="#fff" stroke="#3a9a9a" stroke-width="1.6"/></svg>
<span class="t" style="left:25.299999999999997px;top:354.52000000000004px;color:#3c3c3c;font-size:4.2px;">曲线<i class="l">2</i></span>
<svg style="left:18.6px;top:358.74px;width:5.2px;height:4px" viewBox="0 0 13 10"><path d="M3 9a2.6 2.6 0 0 1 0-5.2a3.6 3.6 0 0 1 7-.4a2.8 2.8 0 0 1 0 5.6Z" fill="#fff" stroke="#3a9a9a" stroke-width="1.6"/></svg>
<span class="t" style="left:25.299999999999997px;top:360.74px;color:#3c3c3c;font-size:4.2px;">道路中心<i class="l">1</i></span>
<svg style="left:18.6px;top:364.96000000000004px;width:5.2px;height:4px" viewBox="0 0 13 10"><path d="M3 9a2.6 2.6 0 0 1 0-5.2a3.6 3.6 0 0 1 7-.4a2.8 2.8 0 0 1 0 5.6Z" fill="#fff" stroke="#3a9a9a" stroke-width="1.6"/></svg>
<span class="t" style="left:25.299999999999997px;top:366.96000000000004px;color:#3c3c3c;font-size:4.2px;">道路中心<i class="l">2</i></span>
<svg style="left:18.6px;top:371.18px;width:5.2px;height:4px" viewBox="0 0 13 10"><path d="M3 9a2.6 2.6 0 0 1 0-5.2a3.6 3.6 0 0 1 7-.4a2.8 2.8 0 0 1 0 5.6Z" fill="#fff" stroke="#3a9a9a" stroke-width="1.6"/></svg>
<span class="t" style="left:25.299999999999997px;top:373.18px;color:#3c3c3c;font-size:4.2px;">横断面图<i class="l">1</i></span>
<svg style="left:18.6px;top:377.40000000000003px;width:5.2px;height:4px" viewBox="0 0 13 10"><path d="M3 9a2.6 2.6 0 0 1 0-5.2a3.6 3.6 0 0 1 7-.4a2.8 2.8 0 0 1 0 5.6Z" fill="#fff" stroke="#3a9a9a" stroke-width="1.6"/></svg>
<span class="t" style="left:25.299999999999997px;top:379.40000000000003px;color:#3c3c3c;font-size:4.2px;">横断面图<i class="l">2</i></span>
<svg style="left:18.6px;top:383.62px;width:5.2px;height:4px" viewBox="0 0 13 10"><path d="M3 9a2.6 2.6 0 0 1 0-5.2a3.6 3.6 0 0 1 7-.4a2.8 2.8 0 0 1 0 5.6Z" fill="#fff" stroke="#3a9a9a" stroke-width="1.6"/></svg>
<span class="t" style="left:25.299999999999997px;top:385.62px;color:#3c3c3c;font-size:4.2px;">纵断面图等</span>
<svg style="left:18.6px;top:389.84000000000003px;width:5.2px;height:4px" viewBox="0 0 13 10"><path d="M3 9a2.6 2.6 0 0 1 0-5.2a3.6 3.6 0 0 1 7-.4a2.8 2.8 0 0 1 0 5.6Z" fill="#fff" stroke="#3a9a9a" stroke-width="1.6"/></svg>
<span class="t" style="left:25.299999999999997px;top:391.84000000000003px;color:#3c3c3c;font-size:4.2px;">遥矿</span>
<div style="left:19.5px;top:395.66px;width:3.2px;height:4.8px;border:0.5px solid #8aa0c0;background:repeating-linear-gradient(#fff 0 0.8px,#9ab 0.8px 1.4px);"></div>
<span class="t" style="left:25.299999999999997px;top:398.06px;color:#3c3c3c;font-size:4.2px;"><i class="l">curv_001</i></span>
<svg style="left:18.6px;top:402.28000000000003px;width:5.2px;height:4px" viewBox="0 0 13 10"><path d="M3 9a2.6 2.6 0 0 1 0-5.2a3.6 3.6 0 0 1 7-.4a2.8 2.8 0 0 1 0 5.6Z" fill="#fff" stroke="#3a9a9a" stroke-width="1.6"/></svg>
<span class="t" style="left:25.299999999999997px;top:404.28000000000003px;color:#3c3c3c;font-size:4.2px;"><i class="l">points_aft_loo...</i></span>
<svg style="left:18.6px;top:408.5px;width:5.2px;height:4px" viewBox="0 0 13 10"><path d="M3 9a2.6 2.6 0 0 1 0-5.2a3.6 3.6 0 0 1 7-.4a2.8 2.8 0 0 1 0 5.6Z" fill="#fff" stroke="#3a9a9a" stroke-width="1.6"/></svg>
<span class="t" style="left:25.299999999999997px;top:410.5px;color:#3c3c3c;font-size:4.2px;"><i class="l">12</i></span>
<div style="left:24.699999999999996px;top:413.82000000000005px;width:10.1px;height:5.8px;background:#2a7ad8;"></div>
<svg style="left:18.6px;top:414.72px;width:5.2px;height:4px" viewBox="0 0 13 10"><path d="M3 9a2.6 2.6 0 0 1 0-5.2a3.6 3.6 0 0 1 7-.4a2.8 2.8 0 0 1 0 5.6Z" fill="#fff" stroke="#3a9a9a" stroke-width="1.6"/></svg>
<span class="t" style="left:25.299999999999997px;top:416.72px;color:#fff;font-size:4.2px;">地面</span>

<div style="left:82.6px;top:344.5px;width:4.9px;height:78.19999999999999px;background:#f0f0f0;"></div>
<div style="left:82.6px;top:392.5px;width:4.9px;height:22.899999999999977px;background:#c9c9c9;"></div>
<span class="t" style="left:83.5px;top:347.6px;font-size:4px;color:#555;">▴</span>
<span class="t" style="left:83.5px;top:420.4px;font-size:4px;color:#555;">▾</span>
<div style="left:5.9px;top:424.4px;width:82.69999999999999px;height:7.0px;background:linear-gradient(#eceff4,#d3d9e2);"></div>
<span class="t" style="left:7.5px;top:428.0px;color:#333;font-size:5px;letter-spacing:0.1px;">视图属性</span>
<span class="t" style="left:84.19999999999999px;top:427.9px;color:#555;font-size:5px;">×</span>
<div style="left:6.800000000000001px;top:431.4px;width:81.19999999999999px;height:84.20000000000005px;background:#fff;border:0.5px solid #dfe2e8;"></div>
<div style="left:55.4px;top:431.4px;width:0.5px;height:84.20000000000005px;background:#e6e6e6;"></div>
<span class="t" style="left:8.5px;top:435.7px;font-size:4.4px;">属性</span>
<span class="t" style="left:58.6px;top:435.7px;font-size:4.4px;">值</span>
<span class="t" style="left:8.5px;top:442.3px;font-size:4.3px;color:#3a3a3a;">前方距离</span>
<span class="t" style="left:57.199999999999996px;top:442.3px;font-size:4.2px;color:#4a4a4a;"><i class="l">105.98</i></span>
<span class="t" style="left:8.5px;top:448.28000000000003px;font-size:4.3px;color:#3a3a3a;">选取高度</span>
<span class="t" style="left:57.199999999999996px;top:448.28000000000003px;font-size:4.2px;color:#4a4a4a;"><i class="l">45</i></span>
<span class="t" style="left:8.5px;top:454.26px;font-size:4.3px;color:#3a3a3a;">自定义旋转点大小</span>
<span class="t" style="left:57.199999999999996px;top:454.26px;font-size:4.2px;color:#4a4a4a;"><i class="l">1</i></span>
<span class="t" style="left:8.5px;top:460.24px;font-size:4.3px;color:#3a3a3a;">视口背景颜色</span>
<div style="left:56.6px;top:458.14px;width:4.2px;height:4.2px;background:#000;"></div>
<span class="t" style="left:62.6px;top:460.24px;font-size:4.2px;color:#4a4a4a;"><i class="l">000000</i></span>
<span class="t" style="left:8.5px;top:466.22px;font-size:4.3px;color:#3a3a3a;">量测点大小</span>
<span class="t" style="left:57.199999999999996px;top:466.22px;font-size:4.2px;color:#4a4a4a;"><i class="l">10</i></span>
<span class="t" style="left:8.5px;top:472.2px;font-size:4.3px;color:#3a3a3a;">量测线宽</span>
<span class="t" style="left:57.199999999999996px;top:472.2px;font-size:4.2px;color:#4a4a4a;"><i class="l">2</i></span>
<span class="t" style="left:8.5px;top:478.18px;font-size:4.3px;color:#3a3a3a;">量测点的颜色</span>
<div style="left:56.6px;top:476.08px;width:4.2px;height:4.2px;background:#1a3fa8;"></div>
<span class="t" style="left:62.6px;top:478.18px;font-size:4.2px;color:#4a4a4a;"><i class="l">0000FF</i></span>
<span class="t" style="left:8.5px;top:484.16px;font-size:4.3px;color:#3a3a3a;">量测线的颜色</span>
<div style="left:56.6px;top:482.06px;width:4.2px;height:4.2px;background:#d81820;"></div>
<span class="t" style="left:62.6px;top:484.16px;font-size:4.2px;color:#4a4a4a;"><i class="l">FF0000</i></span>
<div style="left:7.300000000000001px;top:487.14px;width:75.29999999999998px;height:6px;background:#e4e8f0;"></div>
<span class="t" style="left:8.5px;top:490.14px;font-size:4.3px;color:#999;">显示顶部标题栏</span>
<span class="t" style="left:57.199999999999996px;top:490.14px;font-size:4.2px;color:#4a4a4a;">否</span>
<div style="left:76.19999999999999px;top:487.74px;width:4.6px;height:4.8px;background:#e6e6e6;border:0.4px solid #b0b0b0;"></div>
<span class="t" style="left:77.3px;top:490.14px;font-size:3.4px;color:#555;">▾</span>
<span class="t" style="left:8.5px;top:496.12px;font-size:4.3px;color:#3a3a3a;">透明度</span>
<span class="t" style="left:57.199999999999996px;top:496.12px;font-size:4.2px;color:#4a4a4a;"><i class="l">10</i></span>
<span class="t" style="left:8.5px;top:502.1px;font-size:4.3px;color:#3a3a3a;">彩色带宽度</span>
<span class="t" style="left:57.199999999999996px;top:502.1px;font-size:4.2px;color:#4a4a4a;"><i class="l">1</i></span>
<div style="left:83.19999999999999px;top:438.4px;width:4.6px;height:76.80000000000004px;background:#f0f0f0;"></div>
<div style="left:83.19999999999999px;top:465.4px;width:4.6px;height:45.30000000000001px;background:#c9c9c9;"></div>
<span class="t" style="left:83.99999999999999px;top:442.0px;font-size:4px;color:#555;">▴</span>
<span class="t" style="left:83.99999999999999px;top:513.2px;font-size:4px;color:#555;">▾</span>
<div style="left:5.9px;top:515.7px;width:425px;height:6.3px;background:#c6c9cd;"></div>
<div style="left:89.6px;top:330.6px;width:130.4px;height:185.4px;background:#cfe2f6;border-left:1.3px solid #6a7a8a;border-top:1px solid #7a8a9c;"></div>
<div style="left:91.6px;top:332px;width:128.8px;height:9px;background:linear-gradient(#d6e6f8,#b9d1ec);"></div>
<div style="left:93px;top:334.2px;width:4.2px;height:4.2px;background:#2a86d0;border-radius:50%;"></div>
<span class="t" style="left:98.5px;top:336.6px;font-size:4.3px;color:#1c2c44;">视图监察<i class="l">*</i></span>
<div style="left:187.2px;top:334.6px;width:8.8px;height:4.6px;background:#dce8f6;border:0.5px solid #a4b8d0;border-radius:1px;"></div>
<div style="left:198px;top:334.6px;width:8.6px;height:4.6px;background:#dce8f6;border:0.5px solid #a4b8d0;border-radius:1px;"></div>
<div style="left:207.8px;top:334.4px;width:10px;height:5px;background:linear-gradient(#e8806a,#c83a22);border:0.5px solid #8a3020;border-radius:1px;"></div>
<div style="left:189.8px;top:337px;width:3.6px;height:0.9px;background:#fff;"></div>
<div style="left:200.6px;top:335.8px;width:3.4px;height:2.4px;border:0.6px solid #fff;"></div>
<span class="t" style="left:210.9px;top:336.8px;font-size:4.6px;color:#fff;font-weight:700;">×</span>
<div style="left:94px;top:341px;width:123.7px;height:171.8px;background:#000;"></div>
<div style="left:219.9px;top:330.6px;width:1.8px;height:185.4px;background:#4a5e70;"></div>
<div style="left:221.7px;top:330.6px;width:128.9px;height:185.4px;background:#e6f0fa;border-top:1px solid #8a9aac;"></div>
<div style="left:350.6px;top:330.6px;width:1.5px;height:185.4px;background:#c0c8d4;"></div>
<div style="left:222.6px;top:332px;width:128.8px;height:9px;background:linear-gradient(#eaf0f8,#d8e3f0);"></div>
<div style="left:224.2px;top:334.2px;width:4.2px;height:4.2px;background:#2a86d0;border-radius:50%;"></div>
<span class="t" style="left:230.6px;top:336.6px;font-size:4.3px;color:#8a94a4;">地面</span>
<div style="left:318px;top:334.6px;width:9.6px;height:4.8px;background:#e6eef8;border:0.5px solid #a8b8cc;border-radius:1px;"></div>
<div style="left:328.6px;top:334.6px;width:9.6px;height:4.8px;background:#e6eef8;border:0.5px solid #a8b8cc;border-radius:1px;"></div>
<div style="left:339.2px;top:334.6px;width:9.6px;height:4.8px;background:#e6eef8;border:0.5px solid #a8b8cc;border-radius:1px;"></div>
<div style="left:321px;top:337.2px;width:3.6px;height:0.8px;background:#8a9ab0;"></div>
<div style="left:332px;top:335.8px;width:3px;height:2.2px;border:0.5px solid #8a9ab0;"></div>
<span class="t" style="left:342.6px;top:336.9px;font-size:4px;color:#8a9ab0;">×</span>
<div style="left:224.2px;top:341px;width:124.1px;height:171.8px;background:#000;"></div>
<svg viewBox="0 0 870 550" style="left:0;top:0;width:870px;height:550px;"><defs><clipPath id="cv1"><rect x="94" y="341" width="123.7" height="171.8"/></clipPath><clipPath id="cv2"><rect x="224.2" y="341" width="124.1" height="171.8"/></clipPath><filter id="nz" x="0" y="0" width="100%" height="100%" color-interpolation-filters="sRGB"><feTurbulence type="fractalNoise" baseFrequency="0.9" numOctaves="2" seed="3" result="n"/><feColorMatrix in="n" type="matrix" values="0 0 0 0 0.40  0 0 0 0 0.17  0 0 0 0 0.11  0.9 0 0 0 -0.2" result="c"/><feComposite in="c" in2="SourceGraphic" operator="in" result="d"/><feMerge><feMergeNode in="SourceGraphic"/><feMergeNode in="d"/></feMerge></filter><filter id="nzg" x="0" y="0" width="100%" height="100%" color-interpolation-filters="sRGB"><feTurbulence type="fractalNoise" baseFrequency="1.1" numOctaves="1" seed="8" result="n"/><feColorMatrix in="n" type="matrix" values="0 0 0 0 0.10  0 0 0 0 0.18  0 0 0 0 0.04  0 1.8 0 0 -0.5" result="c"/><feComposite in="c" in2="SourceGraphic" operator="in" result="d"/><feMerge><feMergeNode in="SourceGraphic"/><feMergeNode in="d"/></feMerge></filter></defs><g clip-path="url(#cv1)"><path d="M125.6 342.6L208.2 367.5L208.2 392.8L199.2 394.5L198.4 512.8L115.7 512.8L115.7 504.2L110.8 504.2L110.8 484.6L131.3 483.8L131.3 427.3L110 426.5L110 397.8L108.4 397.8L108.4 390.4L115.7 390.4L115.7 387.1L123.9 386.3L123.9 374.8L106.7 373.2L106.7 348.6L125.6 348.6Z" fill="#3e1108" filter="url(#nz)"/><path d="M193.6 369L197.2 370L197.2 512.8L193.6 512.8ZM199.8 377L202.6 377.6L202.6 392L199.8 392.4Z" fill="#4c8a42" opacity=".45"/><path d="M126.5 345.4L206 369.6L206 373L126.5 348.8ZM115.4 349.6L119.6 349.6L119.6 372.6L115.4 372.2ZM126 375.6L134 375.6Q139 376 139 381L139 412Q139 415.4 142.4 415.4L156.8 415.4L156.8 404.5L160.6 404.5L160.6 466.6L157.2 466.6L157.2 420.2L140 420.2Q133.4 420 133.4 413L133.4 383Q133.4 379.6 130 379.6L126 379.6ZM157.2 483.8L160.8 483.8L160.8 512.8L157.2 512.8ZM132.6 488L135 488L135 512.8L132.6 512.8Z" fill="#4c8a42" opacity=".9" filter="url(#nzg)"/><path d="M163 371Q158 392 168 410T160 470M140 430L140 512M183 400Q175 450 182 512" stroke="#a84a20" stroke-width="0.6" stroke-dasharray="0.7 1.1" fill="none"/><path d="M125.6 342.6L208.2 367.5" stroke="#d83a18" stroke-width="2.2"/><path d="M125.6 342.2L208.2 367.1" stroke="#e6d62e" stroke-width="1.1"/><path d="M125.6 342.6L208.2 367.5L208.2 392.8L199.2 394.5L198.4 512.8L115.7 512.8L115.7 504.2L110.8 504.2L110.8 484.6L131.3 483.8L131.3 427.3L110 426.5L110 397.8L108.4 397.8L108.4 390.4L115.7 390.4L115.7 387.1L123.9 386.3L123.9 374.8L106.7 373.2L106.7 348.6L125.6 348.6Z" fill="none" stroke="#cfbf2e" stroke-width="0.8" stroke-linejoin="miter"/><path d="M106.7 360L109.5 358.6M199.2 394.5L199.2 512" stroke="#c8861e" stroke-width="0.8" fill="none"/><path d="M126 389.6h6M126 394.8h6M120.5 399.3h7M126 404h5M126 409.4h6M118 412.8h6.5M119 418.6h6M126 422.6h5.5" stroke="#e8d030" stroke-width="1.5" fill="none"/><path d="M131.4 389L131.4 393M131.4 408L131.4 411M131.4 421L131.4 424.5" stroke="#e8d030" stroke-width="1.2"/><rect x="119" y="490.8" width="5.8" height="1.1" fill="#e8d83a"/><rect x="119" y="491.90000000000003" width="5.8" height="1.1" fill="#d83a20"/><rect x="119" y="493.0" width="5.8" height="0.9" fill="#58b860"/><rect x="119" y="497.6" width="5.8" height="1.1" fill="#e8d83a"/><rect x="119" y="498.70000000000005" width="5.8" height="1.1" fill="#d83a20"/><rect x="119" y="499.8" width="5.8" height="0.9" fill="#58b860"/><rect x="127.2" y="488" width="5" height="1.1" fill="#e8d83a"/><rect x="127.2" y="489.1" width="5" height="1.1" fill="#d83a20"/><rect x="127.2" y="490.2" width="5" height="0.9" fill="#58b860"/><rect x="127.2" y="501.4" width="5" height="1.1" fill="#e8d83a"/><rect x="127.2" y="502.5" width="5" height="1.1" fill="#d83a20"/><rect x="127.2" y="503.59999999999997" width="5" height="0.9" fill="#58b860"/><rect x="127.2" y="506.2" width="5" height="1.1" fill="#e8d83a"/><rect x="127.2" y="507.3" width="5" height="1.1" fill="#d83a20"/><rect x="127.2" y="508.4" width="5" height="0.9" fill="#58b860"/><rect x="119" y="510.2" width="5.8" height="1.1" fill="#e8d83a"/><rect x="119" y="511.3" width="5.8" height="1.1" fill="#d83a20"/><rect x="119" y="512.4" width="5.8" height="0.9" fill="#58b860"/><path d="M148.9 354.4h2.6M148.9 375.3h2.6M167.7 375.3h2.6M186.9 375.3h2.6M148.9 394.5h2.6M167.7 394.5h2.6M186.9 394.5h2.6M148.9 414.1h2.6M167.7 414.1h2.6M186.9 414.1h2.6M148.9 433.0h2.6M167.7 433.0h2.6M186.9 433.0h2.6M148.9 451.5h2.6M167.7 451.5h2.6M186.9 451.5h2.6M148.9 470.3h2.6M167.7 470.3h2.6M186.9 470.3h2.6M148.9 488.7h2.6M167.7 488.7h2.6M186.9 488.7h2.6M148.9 506.7h2.6M167.7 506.7h2.6M186.9 506.7h2.6M126.9 354.4h2.6M128.3 375.3h2.6" stroke="#e9d53a" stroke-width="2.6" fill="none"/><path d="M148.9 355.8h2.6M148.9 376.7h2.6M167.7 376.7h2.6M186.9 376.7h2.6M148.9 395.9h2.6M167.7 395.9h2.6M186.9 395.9h2.6M148.9 415.5h2.6M167.7 415.5h2.6M186.9 415.5h2.6M148.9 434.4h2.6M167.7 434.4h2.6M186.9 434.4h2.6M148.9 452.9h2.6M167.7 452.9h2.6M186.9 452.9h2.6M148.9 471.7h2.6M167.7 471.7h2.6M186.9 471.7h2.6M148.9 490.1h2.6M167.7 490.1h2.6M186.9 490.1h2.6M148.9 508.1h2.6M167.7 508.1h2.6M186.9 508.1h2.6M126.9 355.8h2.6M128.3 376.7h2.6" stroke="#d8501e" stroke-width="0.7" fill="none" opacity=".8"/><rect x="154.2" y="441" width="9" height="4.2" rx="2.1" fill="none" stroke="#e8782a" stroke-width="0.9"/><path d="M150.6 442.4L156 443.4M153 439.6L153.6 444" stroke="#e8782a" stroke-width="1"/></g><path d="M109.8 483L111.8 477" stroke="#c83040" stroke-width="0.6"/><path d="M109.8 483L104 488.6" stroke="#38b050" stroke-width="0.6"/><path d="M109.8 483L111.4 485" stroke="#38b050" stroke-width="0.6"/><circle cx="112.2" cy="476.6" r="0.9" fill="#fff"/><circle cx="105.6" cy="486.2" r="0.8" fill="#eee"/><circle cx="113.6" cy="485.2" r="0.8" fill="#fff"/><g clip-path="url(#cv2)"><g transform="translate(276.8,358.4) scale(1.14,1.12) translate(-150.3,-354.4)"><path d="M125.6 342.6L208.2 367.5L208.2 392.8L199.2 394.5L198.4 512.8L115.7 512.8L115.7 504.2L110.8 504.2L110.8 484.6L131.3 483.8L131.3 427.3L110 426.5L110 397.8L108.4 397.8L108.4 390.4L115.7 390.4L115.7 387.1L123.9 386.3L123.9 374.8L106.7 373.2L106.7 348.6L125.6 348.6Z" fill="none" stroke="#a03c16" stroke-width="0.5"/><path d="M149.5 354.4h1.4M149.5 375.3h1.4M168.3 375.3h1.4M187.5 375.3h1.4M149.5 394.5h1.4M168.3 394.5h1.4M187.5 394.5h1.4M149.5 414.1h1.4M168.3 414.1h1.4M187.5 414.1h1.4M149.5 433.0h1.4M168.3 433.0h1.4M187.5 433.0h1.4M149.5 451.5h1.4M168.3 451.5h1.4M187.5 451.5h1.4M149.5 470.3h1.4M168.3 470.3h1.4M187.5 470.3h1.4M149.5 488.7h1.4M168.3 488.7h1.4M187.5 488.7h1.4M149.5 506.7h1.4M168.3 506.7h1.4M187.5 506.7h1.4M127.5 354.4h1.4M128.9 375.3h1.4" stroke="#a8401a" stroke-width="1.3" fill="none"/><path d="M163 371Q158 392 168 410T160 470M140 430L140 512M183 400Q175 450 182 512M190 395Q200 392 199 410L196 470" stroke="#a03c16" stroke-width="0.55" stroke-dasharray="0.6 1.2" fill="none"/><path d="M193 405Q184 408 182 420Q180 450 170 462Q160 470 162 500" stroke="#a8421a" stroke-width="0.6" stroke-dasharray="0.6 1" fill="none"/><path d="M126 389.6h6M126 394.8h6M120.5 399.3h7M126 404h5M126 409.4h6M118 412.8h6.5M119 418.6h6M126 422.6h5.5" stroke="#a8401a" stroke-width="0.7" fill="none"/><path d="M150 441h6M152 443.4h5" stroke="#e05a20" stroke-width="1.4"/><path d="M126 375.6L134 375.6M116 349.6L116 372" stroke="#8a3414" stroke-width="0.5" stroke-dasharray="0.8 0.8"/></g></g><path d="M241 485.8L242 478.5" stroke="#d02838" stroke-width="0.7"/><path d="M241 485.8L234.6 487.6" stroke="#38b050" stroke-width="0.7"/><path d="M241 485.8L244 484" stroke="#38b050" stroke-width="0.5"/><circle cx="242.4" cy="477.6" r="0.9" fill="#fff"/><circle cx="236" cy="485.6" r="0.8" fill="#eee"/><circle cx="244.6" cy="483.6" r="0.8" fill="#fff"/></svg>
<div style="left:352px;top:330.2px;width:79px;height:186px;background:#eef0f3;"></div>
<div style="left:354px;top:330.6px;width:77px;height:6.8px;background:linear-gradient(#e6eaf0,#cfd7e2);"></div>
<span class="t" style="left:355.7px;top:334.1px;color:#333;font-size:4.9px;">测站管理</span>
<span class="t" style="left:427px;top:334px;color:#555;font-size:5px;">×</span>
<div style="left:355px;top:337.4px;width:76px;height:101.6px;background:#fff;border:0.5px solid #d4d8de;"></div>
<div style="left:356px;top:339.6px;width:72.4px;height:5.6px;background:#eeeeee;"></div>
<div style="left:357.6px;top:340.4px;width:3.6px;height:3.6px;border:0.5px solid #999;background:#fff;"></div>
<span class="t" style="left:358.3px;top:342.1px;font-size:3.4px;color:#333;">✓</span>
<span class="t" style="left:362.6px;top:342.4px;font-size:4.3px;color:#222;">测站底图</span>
<span class="t" style="left:355.2px;top:445px;font-size:4.3px;color:#222;">点选转站<i class="l">:</i></span>
<div style="left:374.8px;top:441.6px;width:56.5px;height:6.4px;background:#e6e6e6;border:0.5px solid #b8b8b8;"></div>
<span class="t" style="left:376.4px;top:444.9px;font-size:4px;color:#333;">地面未看</span>
<div style="left:356.4px;top:453.2px;width:35.6px;height:52px;border:0.5px solid #d4d4d4;"></div>
<div style="left:358.0px;top:450.6px;width:16px;height:5px;background:#eef0f3;"></div>
<span class="t" style="left:358.59999999999997px;top:453.2px;font-size:4.2px;color:#222;">平移<i class="l">(P)</i></span>
<div style="left:395.4px;top:453.2px;width:35.6px;height:52px;border:0.5px solid #d4d4d4;"></div>
<div style="left:397.0px;top:450.6px;width:16px;height:5px;background:#eef0f3;"></div>
<span class="t" style="left:397.59999999999997px;top:453.2px;font-size:4.2px;color:#222;">旋转<i class="l">(R)</i></span>
<div style="left:358.4px;top:459.7px;width:12.8px;height:7.7px;background:#e4e4e4;border:0.5px solid #c4c4c4;"></div>
<span class="t c" style="left:364.79999999999995px;top:463.59999999999997px;font-size:3.6px;color:#333;"><i class="l">+x</i></span>
<div style="left:375.5px;top:459.7px;width:12.8px;height:7.7px;background:#e4e4e4;border:0.5px solid #c4c4c4;"></div>
<span class="t c" style="left:381.9px;top:463.59999999999997px;font-size:3.6px;color:#333;"><i class="l">-x</i></span>
<div style="left:358.4px;top:472px;width:12.8px;height:7.7px;background:#e4e4e4;border:0.5px solid #c4c4c4;"></div>
<span class="t c" style="left:364.79999999999995px;top:475.9px;font-size:3.6px;color:#333;"><i class="l">+y</i></span>
<div style="left:375.5px;top:472px;width:12.8px;height:7.7px;background:#e4e4e4;border:0.5px solid #c4c4c4;"></div>
<span class="t c" style="left:381.9px;top:475.9px;font-size:3.6px;color:#333;"><i class="l">-y</i></span>
<div style="left:358.4px;top:484.3px;width:12.8px;height:7.7px;background:#e4e4e4;border:0.5px solid #c4c4c4;"></div>
<span class="t c" style="left:364.79999999999995px;top:488.2px;font-size:3.6px;color:#333;"><i class="l">+z</i></span>
<div style="left:375.5px;top:484.3px;width:12.8px;height:7.7px;background:#e4e4e4;border:0.5px solid #c4c4c4;"></div>
<span class="t c" style="left:381.9px;top:488.2px;font-size:3.6px;color:#333;"><i class="l">-z</i></span>
<span class="t" style="left:358.0px;top:499.4px;font-size:4.2px;color:#222;font-weight:700;">步进<i class="l">:</i></span>
<div style="left:366.79999999999995px;top:495.6px;width:17.4px;height:7.4px;background:#fff;border:0.5px solid #b0b0b0;"></div>
<span class="t" style="left:368.0px;top:499.4px;font-size:4px;color:#222;"><i class="l">1.000</i></span>
<div style="left:385.0px;top:495.6px;width:3.6px;height:7.4px;background:#f4f4f4;border:0.5px solid #c0c0c0;"></div>
<span class="t" style="left:385.7px;top:497.4px;font-size:3px;color:#444;">▴</span>
<span class="t" style="left:385.7px;top:501.2px;font-size:3px;color:#444;">▾</span>
<div style="left:397.4px;top:459.7px;width:12.8px;height:7.7px;background:#e4e4e4;border:0.5px solid #c4c4c4;"></div>
<span class="t c" style="left:403.79999999999995px;top:463.59999999999997px;font-size:3.6px;color:#333;"><i class="l">+x</i></span>
<div style="left:414.6px;top:459.7px;width:12.8px;height:7.7px;background:#e4e4e4;border:0.5px solid #c4c4c4;"></div>
<span class="t c" style="left:421.0px;top:463.59999999999997px;font-size:3.6px;color:#333;"><i class="l">-x</i></span>
<div style="left:397.4px;top:472px;width:12.8px;height:7.7px;background:#e4e4e4;border:0.5px solid #c4c4c4;"></div>
<span class="t c" style="left:403.79999999999995px;top:475.9px;font-size:3.6px;color:#333;"><i class="l">+y</i></span>
<div style="left:414.6px;top:472px;width:12.8px;height:7.7px;background:#e4e4e4;border:0.5px solid #c4c4c4;"></div>
<span class="t c" style="left:421.0px;top:475.9px;font-size:3.6px;color:#333;"><i class="l">-y</i></span>
<div style="left:397.4px;top:484.3px;width:12.8px;height:7.7px;background:#e4e4e4;border:0.5px solid #c4c4c4;"></div>
<span class="t c" style="left:403.79999999999995px;top:488.2px;font-size:3.6px;color:#333;"><i class="l">+z</i></span>
<div style="left:414.6px;top:484.3px;width:12.8px;height:7.7px;background:#e4e4e4;border:0.5px solid #c4c4c4;"></div>
<span class="t c" style="left:421.0px;top:488.2px;font-size:3.6px;color:#333;"><i class="l">-z</i></span>
<span class="t" style="left:397.0px;top:499.4px;font-size:4.2px;color:#222;font-weight:700;">步进<i class="l">:</i></span>
<div style="left:405.79999999999995px;top:495.6px;width:17.4px;height:7.4px;background:#fff;border:0.5px solid #b0b0b0;"></div>
<span class="t" style="left:407.0px;top:499.4px;font-size:4px;color:#222;"><i class="l">1.000</i></span>
<div style="left:424.0px;top:495.6px;width:3.6px;height:7.4px;background:#f4f4f4;border:0.5px solid #c0c0c0;"></div>
<span class="t" style="left:424.7px;top:497.4px;font-size:3px;color:#444;">▴</span>
<span class="t" style="left:424.7px;top:501.2px;font-size:3px;color:#444;">▾</span>
<div style="left:354.6px;top:508px;width:76.4px;height:0.5px;background:#b4b8c0;"></div>
<div style="left:355.6px;top:508.2px;width:22.4px;height:7.4px;background:#fff;border:0.5px solid #a8acb4;border-top:none;"></div>
<span class="t" style="left:357px;top:512.6px;font-size:4.7px;color:#222;letter-spacing:0.3px;">测站管理</span>
<span class="t" style="left:381.6px;top:512.6px;font-size:4.7px;color:#333;letter-spacing:0.3px;">点信息</span>
<span class="t" style="left:401.6px;top:512.6px;font-size:4.7px;color:#333;letter-spacing:0.3px;">已选数据</span></div></div>
<div class="pan sc" style="left:439.6px;top:287.6px;width:425px;height:234px;background:#dfe2e7;"><div class="bl" style="left:-439.6px;top:-287.6px;width:870px;height:550px;"><div style="left:440.2px;top:287.8px;width:425px;height:7.8px;background:#fff;"></div>
<div style="left:441.5px;top:289.8px;width:4.4px;height:4.4px;background:#2a86d0;border-radius:50%;border:0.8px solid #1a5fa8;"></div>
<span class="t" style="left:447.5px;top:291.9px;color:#777;font-size:4.6px;"><i class="l">AAAAAStonexSiScan - [F:\</i>演示数据<i class="l">\</i>山<i class="l">\</i>甲<i class="l">\</i>山<i class="l">.psi]</i></span>
<span class="t" style="left:830.8px;top:291.6px;color:#777;font-size:5px;">–</span>
<div style="left:845.1px;top:290.1px;width:3.2px;height:3.2px;border:0.5px solid #8a8a8a;"></div>
<span class="t" style="left:859.1px;top:291.6px;color:#666;font-size:4.2px;">✕</span>
<div style="left:440.2px;top:295.5px;width:425px;height:7.6px;background:#e8eaee;"></div>
<span class="t" style="left:445.2px;top:299.5px;letter-spacing:0.25px;color:#3a3a3a;font-size:5px;">文件</span>
<span class="t" style="left:460.2px;top:299.5px;letter-spacing:0.25px;color:#3a3a3a;font-size:5px;">编辑</span>
<span class="t" style="left:475.3px;top:299.5px;letter-spacing:0.25px;color:#3a3a3a;font-size:5px;">量测</span>
<span class="t" style="left:489.5px;top:299.5px;letter-spacing:0.25px;color:#3a3a3a;font-size:5px;">预处理</span>
<span class="t" style="left:508.7px;top:299.5px;letter-spacing:0.25px;color:#3a3a3a;font-size:5px;">拼接</span>
<span class="t" style="left:523.8px;top:299.5px;letter-spacing:0.25px;color:#3a3a3a;font-size:5px;">分类</span>
<span class="t" style="left:538.0px;top:299.5px;letter-spacing:0.25px;color:#3a3a3a;font-size:5px;">体积</span>
<span class="t" style="left:553.0px;top:299.5px;letter-spacing:0.25px;color:#3a3a3a;font-size:5px;">测图</span>
<span class="t" style="left:568.1px;top:299.5px;letter-spacing:0.25px;color:#3a3a3a;font-size:5px;">导出</span>
<span class="t" style="left:582.7px;top:299.5px;letter-spacing:0.25px;color:#3a3a3a;font-size:5px;">地形</span>
<span class="t" style="left:596.9px;top:299.5px;letter-spacing:0.25px;color:#3a3a3a;font-size:5px;">动画</span>
<span class="t" style="left:611.9px;top:299.5px;letter-spacing:0.25px;color:#3a3a3a;font-size:5px;">布局</span>
<span class="t" style="left:626.1px;top:299.5px;letter-spacing:0.25px;color:#3a3a3a;font-size:5px;">帮助</span>
<div style="left:440.2px;top:303.1px;width:425px;height:10.7px;background:#e6e8ec;"></div>
<div style="left:441.3px;top:303.5px;width:380px;height:10px;background:#f7f8f9;border-radius:1px;"></div>
<div style="opacity:.88;left:446.0px;top:306.0px;width:4px;height:6px;background:#fff;border:0.6px solid #a4aec0;"></div>
<div style="opacity:.88;left:455.0px;top:306.0px;width:5px;height:5px;background:#ecc050;border-radius:1px;"></div>
<div style="opacity:.88;left:464.0px;top:306.0px;width:5px;height:5px;background:#5c64ba;border-radius:1px;"></div>
<div style="opacity:.88;left:476.0px;top:306.0px;width:6px;height:6px;background:linear-gradient(135deg,#fff 55%,#8ab0d8 55%);border:1px solid #3a70a8;border-radius:1px;"></div>
<svg style="opacity:.88;left:485.0px;top:306.0px;width:6px;height:6px" viewBox="0 0 10 10"><path d="M1.5 1.5L8.5 8.5M8.5 1.5L1.5 8.5" stroke="#d83030" stroke-width="3" stroke-linecap="round"/></svg>
<div style="opacity:.88;left:497.0px;top:306.0px;width:6px;height:6px;border:2px dotted #3a86d0;border-radius:50%;background:#fff;"></div>
<div style="opacity:.88;left:511.0px;top:307.0px;width:4px;height:4px;border:1.4px solid #6aaa7a;border-radius:50%;"></div>
<div style="opacity:.88;left:519.0px;top:306.0px;width:6px;height:6px;background:linear-gradient(135deg,#fff 55%,#f6d4b8 55%);border:1px solid #e8853a;border-radius:1px;"></div>
<div style="opacity:.88;left:528.0px;top:306.0px;width:6px;height:6px;background:linear-gradient(135deg,#fff 55%,#fff 55%);border:1px solid #e8853a;border-radius:1px;"></div>
<div style="opacity:.88;left:538.0px;top:306.0px;width:6px;height:6px;background:linear-gradient(135deg,#fff 55%,#e8853a 55%);border:1px solid #e8853a;border-radius:1px;"></div>
<div style="opacity:.88;left:546.0px;top:306.0px;width:6px;height:6px;background:linear-gradient(135deg,#fff 55%,#f0a868 55%);border:1px solid #e8853a;border-radius:1px;"></div>
<div style="opacity:.88;left:556.0px;top:306.0px;width:6px;height:6px;background:linear-gradient(135deg,#fff 55%,#fff 55%);border:1px solid #e8853a;border-radius:1px;"></div>
<div style="opacity:.88;left:565.0px;top:306.0px;width:6px;height:6px;background:linear-gradient(135deg,#fff 55%,#f4f4f4 55%);border:1px solid #d8a070;border-radius:1px;"></div>
<div style="opacity:.88;left:575.0px;top:306.0px;width:6px;height:6px;background:#e88a32;border-radius:50%;"></div>
<div style="opacity:.88;left:588.0px;top:306.0px;width:5px;height:5px;background:linear-gradient(135deg,#fff 55%,#3a88c8 55%);border:1px solid #3a88c8;border-radius:1px;"></div>
<div style="opacity:.88;left:598.0px;top:307.0px;width:4px;height:4px;background:linear-gradient(135deg,#d85050 50%,#4a78c8 50%);border-radius:1px;"></div>
<div style="opacity:.88;left:607.0px;top:306.0px;width:5px;height:5px;background:linear-gradient(135deg,#e890b0 50%,#5a90d0 50%);border-radius:1px;"></div>
<div style="opacity:.88;left:617.0px;top:307.0px;width:4px;height:4px;border:1.4px solid #e8a0b8;border-radius:50%;"></div>
<div style="opacity:.88;left:625.0px;top:306.0px;width:5px;height:5px;background:linear-gradient(135deg,#fff 55%,#e4e6ea 55%);border:1px solid #a8acb4;border-radius:1px;"></div>
<div style="opacity:.88;left:635.0px;top:307.0px;width:4px;height:4px;background:linear-gradient(135deg,#4a98c8 50%,#c84848 50%);border-radius:1px;"></div>
<div style="opacity:.88;left:644.0px;top:306.0px;width:5px;height:5px;border:0.7px solid #9a9ea6;background:linear-gradient(90deg,transparent 45%,#9a9ea6 45%,#9a9ea6 58%,transparent 58%),linear-gradient(transparent 45%,#9a9ea6 45%,#9a9ea6 58%,transparent 58%),#fff;"></div>
<div style="left:472.7px;top:305.1px;width:0.6px;height:7px;background:#c4c7cc;"></div>
<div style="left:493.7px;top:305.1px;width:0.6px;height:7px;background:#c4c7cc;"></div>
<div style="left:506.3px;top:305.1px;width:0.6px;height:7px;background:#c4c7cc;"></div>
<div style="left:585.0px;top:305.1px;width:0.6px;height:7px;background:#c4c7cc;"></div>
<div style="left:652.1px;top:305.1px;width:0.6px;height:7px;background:#c4c7cc;"></div>
<div style="left:674.6px;top:305.1px;width:0.6px;height:7px;background:#c4c7cc;"></div>
<div style="left:654.9px;top:304.40000000000003px;width:8px;height:8.4px;background:linear-gradient(135deg,#2a70c8,#38b0a0 60%,#78c850);border:0.5px solid #2a5a98;"></div>
<div style="left:664.1px;top:304.8px;width:8px;height:7.8px;background:linear-gradient(#c82020 30%,#e8c020 45%,#30a040 60%,#2050c0 85%);border-radius:3px 3px 0 0;"></div>
<span class="t g" style="left:678.0px;top:308.6px;">着色方式<i class="l">:</i></span>
<span class="t" style="left:701.3px;top:308.6px;color:#111;">高程彩色</span>
<span class="t" style="left:728.8px;top:308.6px;font-size:3.6px;color:#555;">▾</span>
<div style="left:734.9px;top:305.1px;width:0.6px;height:7px;background:#c4c7cc;"></div>
<span class="t g" style="left:738.3px;top:308.6px;">打开文件列表<i class="l">:</i></span>
<span class="t" style="left:772.1px;top:308.6px;color:#111;"><i class="l">points_aft_loop.cloud</i></span>
<span class="t" style="left:816.1px;top:308.6px;font-size:3.6px;color:#555;">▾</span>
<div style="left:440.2px;top:313.8px;width:425px;height:10.2px;background:#e6e8ec;"></div>
<div style="left:441.3px;top:314.1px;width:240.5px;height:9.6px;background:#f7f8f9;border-radius:1px;"></div>
<div style="opacity:.88;left:446.0px;top:317.0px;width:4px;height:4px;background:#8cc860;border-radius:1px;"></div>
<svg style="opacity:.88;left:454.0px;top:316.0px;width:6px;height:6px" viewBox="0 0 10 10"><path d="M1 8Q5 0 9 8" stroke="#68b048" stroke-width="2" fill="none"/></svg>
<div style="opacity:.88;left:466.4px;top:316.0px;width:1.3px;height:6px;background:#e89a38;"></div>
<svg style="opacity:.88;left:474.0px;top:317.0px;width:5px;height:5px" viewBox="0 0 10 10"><path d="M5 0.5L9.5 9.5H0.5Z" fill="#eaa830"/></svg>
<svg style="opacity:.88;left:482.0px;top:316.0px;width:6px;height:6px" viewBox="0 0 10 10"><path d="M5 0.5L9.5 9.5H0.5Z" fill="#4a5a98"/></svg>
<svg style="opacity:.88;left:492.0px;top:316.0px;width:6px;height:6px" viewBox="0 0 10 10"><path d="M1 8Q5 0 9 8" stroke="#88b850" stroke-width="2" fill="none"/></svg>
<svg style="opacity:.88;left:504.0px;top:316.0px;width:6px;height:6px" viewBox="0 0 10 10"><path d="M5 0.5L9.5 9.5H0.5Z" fill="#eaa838"/></svg>
<svg style="opacity:.88;left:514.0px;top:316.0px;width:6px;height:6px" viewBox="0 0 10 10"><path d="M1.5 8.5L8.5 1.5" stroke="#e8842a" stroke-width="3" stroke-linecap="round"/></svg>
<svg style="opacity:.88;left:523.0px;top:316.0px;width:6px;height:6px" viewBox="0 0 10 10"><path d="M1.5 8.5L8.5 1.5" stroke="#4a84c0" stroke-width="3" stroke-linecap="round"/></svg>
<div style="opacity:.88;left:534.0px;top:317.0px;width:4px;height:4px;border:1.4px solid #a8b0b8;border-radius:50%;"></div>
<div style="opacity:.88;left:543.0px;top:317.0px;width:5px;height:5px;border:1.4px solid #a8acb4;border-radius:50%;"></div>
<div style="opacity:.88;left:554.0px;top:317.0px;width:5px;height:5px;border:1.4px solid #989ca4;border-radius:50%;"></div>
<svg style="opacity:.88;left:566.0px;top:316.0px;width:6px;height:6px" viewBox="0 0 10 10"><path d="M1 8Q5 0 9 8" stroke="#e06868" stroke-width="2" fill="none"/></svg>
<div style="opacity:.88;left:577.0px;top:317.0px;width:4px;height:4px;background:#d04040;border-radius:50%;"></div>
<svg style="opacity:.88;left:587.0px;top:316.0px;width:6px;height:6px" viewBox="0 0 10 10"><path d="M1.5 1.5L8.5 8.5M8.5 1.5L1.5 8.5" stroke="#3a68c0" stroke-width="3" stroke-linecap="round"/></svg>
<svg style="opacity:.88;left:600.0px;top:316.0px;width:7px;height:7px" viewBox="0 0 10 10"><path d="M5 0.5L9.5 9.5H0.5Z" fill="#3aa0d0"/></svg>
<div style="opacity:.88;left:611.0px;top:316.0px;width:4px;height:6px;background:#fff;border:0.6px solid #70747a;"></div>
<div style="opacity:.88;left:621.0px;top:316.0px;width:7px;height:7px;background:#4a78c8;border-radius:50%;"></div>
<div style="opacity:.88;left:631.0px;top:316.0px;width:7px;height:7px;background:#80848c;border-radius:50%;"></div>
<div style="opacity:.88;left:643.0px;top:316.0px;width:6px;height:6px;border:0.7px solid #60646c;background:linear-gradient(90deg,transparent 45%,#60646c 45%,#60646c 58%,transparent 58%),linear-gradient(transparent 45%,#60646c 45%,#60646c 58%,transparent 58%),#fff;"></div>
<div style="opacity:.88;left:652.0px;top:316.0px;width:6px;height:6px;border:0.7px solid #60646c;background:linear-gradient(90deg,transparent 45%,#60646c 45%,#60646c 58%,transparent 58%),linear-gradient(transparent 45%,#60646c 45%,#60646c 58%,transparent 58%),#fff;"></div>
<div style="opacity:.88;left:663.0px;top:317.0px;width:5px;height:5px;background:#4a88a8;border-radius:1px;"></div>
<div style="opacity:.88;left:673.0px;top:317.0px;width:3px;height:5px;background:#fff;border:0.6px solid #ccd0d6;"></div>
<div style="left:580.5px;top:318.5px;width:3.6px;height:3.6px;background:#2848b0;border-radius:50%;"></div>
<div style="left:500.3px;top:315.6px;width:0.6px;height:7px;background:#c4c7cc;"></div>
<div style="left:551.3px;top:315.6px;width:0.6px;height:7px;background:#c4c7cc;"></div>
<div style="left:563.3px;top:315.6px;width:0.6px;height:7px;background:#c4c7cc;"></div>
<div style="left:584.8px;top:315.6px;width:0.6px;height:7px;background:#c4c7cc;"></div>
<div style="left:596.8px;top:315.6px;width:0.6px;height:7px;background:#c4c7cc;"></div>
<div style="left:618.9px;top:315.6px;width:0.6px;height:7px;background:#c4c7cc;"></div>
<div style="left:640.3px;top:315.6px;width:0.6px;height:7px;background:#c4c7cc;"></div>
<div style="left:439.6px;top:324.4px;width:83.39999999999998px;height:8.0px;background:linear-gradient(#eceff4,#d3d9e2);"></div>
<span class="t" style="left:441.5px;top:328.59999999999997px;color:#333;font-size:5.2px;">工程</span>
<span class="t" style="left:518.8px;top:328.4px;color:#555;font-size:5px;">×</span>
<div style="left:440.70000000000005px;top:332.4px;width:81.99999999999997px;height:85.20000000000005px;background:#fff;border:0.5px solid #c4cad4;"></div>
<span class="t" style="left:442.1px;top:336.09999999999997px;font-size:4.4px;">数据</span>
<span class="t" style="left:491.90000000000003px;top:336.09999999999997px;font-size:4.4px;">拼接</span>
<span class="t" style="left:503.90000000000003px;top:336.09999999999997px;font-size:4.4px;"><i class="l">Gps</i></span>
<svg style="left:452.3px;top:341.6px;width:5.2px;height:4px" viewBox="0 0 13 10"><path d="M3 9a2.6 2.6 0 0 1 0-5.2a3.6 3.6 0 0 1 7-.4a2.8 2.8 0 0 1 0 5.6Z" fill="#fff" stroke="#3a9a9a" stroke-width="1.6"/></svg>
<span class="t" style="left:459.0px;top:343.6px;color:#3c3c3c;font-size:4.2px;">曲线</span>
<svg style="left:452.3px;top:347.82000000000005px;width:5.2px;height:4px" viewBox="0 0 13 10"><path d="M3 9a2.6 2.6 0 0 1 0-5.2a3.6 3.6 0 0 1 7-.4a2.8 2.8 0 0 1 0 5.6Z" fill="#fff" stroke="#3a9a9a" stroke-width="1.6"/></svg>
<span class="t" style="left:459.0px;top:349.82000000000005px;color:#3c3c3c;font-size:4.2px;">曲线<i class="l">2</i></span>
<svg style="left:452.3px;top:354.04px;width:5.2px;height:4px" viewBox="0 0 13 10"><path d="M3 9a2.6 2.6 0 0 1 0-5.2a3.6 3.6 0 0 1 7-.4a2.8 2.8 0 0 1 0 5.6Z" fill="#fff" stroke="#3a9a9a" stroke-width="1.6"/></svg>
<span class="t" style="left:459.0px;top:356.04px;color:#3c3c3c;font-size:4.2px;">道路中心<i class="l">1</i></span>
<svg style="left:452.3px;top:360.26000000000005px;width:5.2px;height:4px" viewBox="0 0 13 10"><path d="M3 9a2.6 2.6 0 0 1 0-5.2a3.6 3.6 0 0 1 7-.4a2.8 2.8 0 0 1 0 5.6Z" fill="#fff" stroke="#3a9a9a" stroke-width="1.6"/></svg>
<span class="t" style="left:459.0px;top:362.26000000000005px;color:#3c3c3c;font-size:4.2px;">道路中心<i class="l">2</i></span>
<svg style="left:452.3px;top:366.48px;width:5.2px;height:4px" viewBox="0 0 13 10"><path d="M3 9a2.6 2.6 0 0 1 0-5.2a3.6 3.6 0 0 1 7-.4a2.8 2.8 0 0 1 0 5.6Z" fill="#fff" stroke="#3a9a9a" stroke-width="1.6"/></svg>
<span class="t" style="left:459.0px;top:368.48px;color:#3c3c3c;font-size:4.2px;">横断面图<i class="l">1</i></span>
<svg style="left:452.3px;top:372.70000000000005px;width:5.2px;height:4px" viewBox="0 0 13 10"><path d="M3 9a2.6 2.6 0 0 1 0-5.2a3.6 3.6 0 0 1 7-.4a2.8 2.8 0 0 1 0 5.6Z" fill="#fff" stroke="#3a9a9a" stroke-width="1.6"/></svg>
<span class="t" style="left:459.0px;top:374.70000000000005px;color:#3c3c3c;font-size:4.2px;">横断面图<i class="l">2</i></span>
<svg style="left:452.3px;top:378.92px;width:5.2px;height:4px" viewBox="0 0 13 10"><path d="M3 9a2.6 2.6 0 0 1 0-5.2a3.6 3.6 0 0 1 7-.4a2.8 2.8 0 0 1 0 5.6Z" fill="#fff" stroke="#3a9a9a" stroke-width="1.6"/></svg>
<span class="t" style="left:459.0px;top:380.92px;color:#3c3c3c;font-size:4.2px;">纵断面图等</span>
<svg style="left:452.3px;top:385.14000000000004px;width:5.2px;height:4px" viewBox="0 0 13 10"><path d="M3 9a2.6 2.6 0 0 1 0-5.2a3.6 3.6 0 0 1 7-.4a2.8 2.8 0 0 1 0 5.6Z" fill="#fff" stroke="#3a9a9a" stroke-width="1.6"/></svg>
<span class="t" style="left:459.0px;top:387.14000000000004px;color:#3c3c3c;font-size:4.2px;">遥矿</span>
<div style="left:458.4px;top:390.46000000000004px;width:19.9px;height:5.8px;background:#2a7ad8;"></div>
<div style="left:453.20000000000005px;top:390.96000000000004px;width:3.2px;height:4.8px;border:0.5px solid #8aa0c0;background:repeating-linear-gradient(#fff 0 0.8px,#9ab 0.8px 1.4px);"></div>
<span class="t" style="left:459.0px;top:393.36px;color:#fff;font-size:4.2px;"><i class="l">curv_001</i></span>
<svg style="left:452.3px;top:397.58000000000004px;width:5.2px;height:4px" viewBox="0 0 13 10"><path d="M3 9a2.6 2.6 0 0 1 0-5.2a3.6 3.6 0 0 1 7-.4a2.8 2.8 0 0 1 0 5.6Z" fill="#fff" stroke="#3a9a9a" stroke-width="1.6"/></svg>
<span class="t" style="left:459.0px;top:399.58000000000004px;color:#3c3c3c;font-size:4.2px;"><i class="l">points_aft_loo...</i></span>
<svg style="left:452.3px;top:403.8px;width:5.2px;height:4px" viewBox="0 0 13 10"><path d="M3 9a2.6 2.6 0 0 1 0-5.2a3.6 3.6 0 0 1 7-.4a2.8 2.8 0 0 1 0 5.6Z" fill="#fff" stroke="#3a9a9a" stroke-width="1.6"/></svg>
<span class="t" style="left:459.0px;top:405.8px;color:#3c3c3c;font-size:4.2px;"><i class="l">12</i></span>
<div style="left:448.0px;top:411.02000000000004px;width:4.6px;height:2.2px;background:#777;border-radius:1px;"></div>
<span class="t" style="left:454.1px;top:412.02000000000004px;color:#3c3c3c;font-size:4.2px;">导出点云</span>

<div style="left:517px;top:338.9px;width:4.9px;height:78.20000000000005px;background:#f0f0f0;"></div>
<div style="left:517px;top:389.4px;width:4.9px;height:22.900000000000034px;background:#c9c9c9;"></div>
<span class="t" style="left:517.9px;top:342.0px;font-size:4px;color:#555;">▴</span>
<span class="t" style="left:517.9px;top:414.8px;font-size:4px;color:#555;">▾</span>
<div style="left:439.6px;top:419px;width:83.39999999999998px;height:7.600000000000023px;background:linear-gradient(#eceff4,#d3d9e2);"></div>
<span class="t" style="left:441.20000000000005px;top:422.90000000000003px;color:#333;font-size:5px;letter-spacing:0.1px;">视图属性</span>
<span class="t" style="left:518.6px;top:422.8px;color:#555;font-size:5px;">▾</span>
<div style="left:440.5px;top:426.6px;width:81.89999999999998px;height:85.89999999999998px;background:#fff;border:0.5px solid #dfe2e8;"></div>
<div style="left:489.8px;top:426.6px;width:0.5px;height:85.89999999999998px;background:#e6e6e6;"></div>
<span class="t" style="left:442.20000000000005px;top:430.90000000000003px;font-size:4.4px;">属性</span>
<span class="t" style="left:493.0px;top:430.90000000000003px;font-size:4.4px;">值</span>
<div style="left:441.0px;top:434.5px;width:75.99999999999997px;height:6px;background:#ececec;"></div>
<span class="t" style="left:442.20000000000005px;top:437.5px;font-size:4.3px;color:#3a3a3a;">当前坐标系</span>
<span class="t" style="left:491.6px;top:437.5px;font-size:4.2px;color:#4a4a4a;">工程坐标系</span>
<div style="left:441.0px;top:440.48px;width:75.99999999999997px;height:6px;background:#ececec;"></div>
<span class="t" style="left:442.20000000000005px;top:443.48px;font-size:4.3px;color:#3a3a3a;">加载点总数</span>
<span class="t" style="left:491.6px;top:443.48px;font-size:4.2px;color:#4a4a4a;"><i class="l">2047569</i></span>
<div style="left:441.0px;top:446.46px;width:75.99999999999997px;height:6px;background:#ececec;"></div>
<span class="t" style="left:442.20000000000005px;top:449.46px;font-size:4.3px;color:#3a3a3a;">已选点总数</span>
<span class="t" style="left:491.6px;top:449.46px;font-size:4.2px;color:#4a4a4a;"><i class="l">0</i></span>
<span class="t" style="left:442.20000000000005px;top:455.44px;font-size:4.3px;color:#3a3a3a;">投影模式</span>
<span class="t" style="left:491.6px;top:455.44px;font-size:4.2px;color:#4a4a4a;">平行投影</span>
<span class="t" style="left:442.20000000000005px;top:461.42px;font-size:4.3px;color:#3a3a3a;">视口近面</span>
<span class="t" style="left:491.6px;top:461.42px;font-size:4.2px;color:#4a4a4a;"><i class="l">0.17</i></span>
<span class="t" style="left:442.20000000000005px;top:467.4px;font-size:4.3px;color:#3a3a3a;">视口远面</span>
<span class="t" style="left:491.6px;top:467.4px;font-size:4.2px;color:#4a4a4a;"><i class="l">167.32</i></span>
<span class="t" style="left:442.20000000000005px;top:473.38px;font-size:4.3px;color:#3a3a3a;">缩放比例</span>
<span class="t" style="left:491.6px;top:473.38px;font-size:4.2px;color:#4a4a4a;"><i class="l">13.98</i></span>
<span class="t" style="left:442.20000000000005px;top:479.36px;font-size:4.3px;color:#3a3a3a;">自定义旋转点大小</span>
<span class="t" style="left:491.6px;top:479.36px;font-size:4.2px;color:#4a4a4a;"><i class="l">1</i></span>
<span class="t" style="left:442.20000000000005px;top:485.34000000000003px;font-size:4.3px;color:#3a3a3a;">视口背景颜色</span>
<div style="left:491.0px;top:483.24px;width:4.2px;height:4.2px;background:#000;"></div>
<span class="t" style="left:497.0px;top:485.34000000000003px;font-size:4.2px;color:#4a4a4a;"><i class="l">000000</i></span>
<span class="t" style="left:442.20000000000005px;top:491.32px;font-size:4.3px;color:#3a3a3a;">量测点大小</span>
<span class="t" style="left:491.6px;top:491.32px;font-size:4.2px;color:#4a4a4a;"><i class="l">10</i></span>
<span class="t" style="left:442.20000000000005px;top:497.3px;font-size:4.3px;color:#3a3a3a;">量测线宽</span>
<span class="t" style="left:491.6px;top:497.3px;font-size:4.2px;color:#4a4a4a;"><i class="l">2</i></span>
<span class="t" style="left:442.20000000000005px;top:503.28px;font-size:4.3px;color:#3a3a3a;">量测点的颜色</span>
<div style="left:491.0px;top:501.17999999999995px;width:4.2px;height:4.2px;background:#1a3fa8;"></div>
<span class="t" style="left:497.0px;top:503.28px;font-size:4.2px;color:#4a4a4a;"><i class="l">0000FF</i></span>
<span class="t" style="left:442.20000000000005px;top:509.26px;font-size:4.3px;color:#3a3a3a;">量测线的颜色</span>
<div style="left:491.0px;top:507.15999999999997px;width:4.2px;height:4.2px;background:#d81820;"></div>
<span class="t" style="left:497.0px;top:509.26px;font-size:4.2px;color:#4a4a4a;"><i class="l">FF0000</i></span>
<div style="left:517.6px;top:433.6px;width:4.6px;height:78.49999999999997px;background:#f0f0f0;"></div>
<div style="left:517.6px;top:441px;width:4.6px;height:46.60000000000002px;background:#c9c9c9;"></div>
<span class="t" style="left:518.4px;top:437.20000000000005px;font-size:4px;color:#555;">▴</span>
<span class="t" style="left:518.4px;top:510.1px;font-size:4px;color:#555;">▾</span>
<div style="left:523px;top:324.4px;width:342px;height:8.4px;background:#dde1e8;"></div>
<div style="left:525.4px;top:325px;width:48.6px;height:7.8px;background:#f7f8fa;border:0.5px solid #a8b0bc;border-bottom:none;"></div>
<div style="left:527px;top:326.8px;width:4.2px;height:4.2px;background:#2a86d0;border-radius:50%;"></div>
<span class="t" style="left:532px;top:329px;font-size:4.8px;color:#222;font-weight:700;"><i class="l">points_aft_loop</i></span>
<span class="t" style="left:569.4px;top:329px;font-size:4.6px;color:#555;">×</span>
<span class="t" style="left:784.4px;top:328.4px;font-size:4.4px;color:#444;">▾</span>
<div style="left:789.4px;top:324.6px;width:76px;height:7.4px;background:linear-gradient(#d9e2ee,#bccadc);"></div>
<span class="t" style="left:792.6px;top:328.2px;font-size:4.9px;color:#333;">测量管理</span>
<div style="left:523px;top:332.8px;width:3px;height:180px;background:#eef0f3;"></div>
<svg viewBox="526 333.4 240 178.4" style="left:526px;top:333.4px;width:240px;height:178.4px;" preserveAspectRatio="none"><defs><linearGradient id="gsky" x1="0" y1="0" x2="1" y2="0.3"><stop offset="0" stop-color="#6c5d55"/><stop offset="0.55" stop-color="#6a574c"/><stop offset="1" stop-color="#674b3e"/></linearGradient><linearGradient id="gbase" x1="0" y1="0" x2="1" y2="0"><stop offset="0" stop-color="#c8221e"/><stop offset="0.3" stop-color="#cd2d1c"/><stop offset="0.5" stop-color="#cc4a1c"/><stop offset="0.68" stop-color="#c4701e"/><stop offset="0.85" stop-color="#bd8820"/><stop offset="1" stop-color="#b8921e"/></linearGradient><linearGradient id="gbot" x1="0" y1="0" x2="0" y2="1"><stop offset="0" stop-color="#cc2c1c" stop-opacity="0"/><stop offset="1" stop-color="#cc2c1c" stop-opacity=".9"/></linearGradient><filter id="b4" x="-20%" y="-20%" width="140%" height="140%"><feGaussianBlur stdDeviation="3.2"/></filter><filter id="b3" x="-20%" y="-20%" width="140%" height="140%"><feGaussianBlur stdDeviation="2.2"/></filter><filter id="b2" x="-20%" y="-20%" width="140%" height="140%"><feGaussianBlur stdDeviation="1.3"/></filter><filter id="b1" x="-20%" y="-20%" width="140%" height="140%"><feGaussianBlur stdDeviation="0.6"/></filter><clipPath id="ct"><rect x="526" y="370.6" width="240" height="106.8"/></clipPath></defs><rect x="526" y="333.4" width="240" height="37.4" fill="url(#gsky)"/><rect x="526" y="370.6" width="240" height="106.8" fill="url(#gbase)"/><g clip-path="url(#ct)"><rect x="526" y="440" width="240" height="38" fill="url(#gbot)"/><path d="M553 404L564 397L576 392.3L598 390L618 391.2L637.4 395.5L652.7 401L662 401.5L683.6 408.6L705.4 415.2L727.2 419.5L744.7 425L768 429.5L768 481L740 481L718 480L706 474L692 458L680 447L668 444L656 448L640 457L626 462L613.4 464.2L604.7 456.6L590 446L569.8 437L556.6 428.3L549 417.3Z" fill="#f0e21c" filter="url(#b3)"/><path d="M636 466L654 454L670 449L684 456L698 470L712 482L636 482Z" fill="#dd5a1a" filter="url(#b3)"/><path d="M640 480L660 464L676 460L692 474L700 482Z" fill="#d63c18" filter="url(#b3)"/><ellipse cx="731.5" cy="409.6" rx="9" ry="5" fill="#ece41e" filter="url(#b2)"/><ellipse cx="716" cy="400" rx="3" ry="1.6" fill="#e0c428" filter="url(#b1)" opacity=".8"/><path d="M556 406.5L567 399.5L579 394.8L598 392.5L618 393.7L637.4 398.0L652.7 403.5L662 404.0L683.6 411.1L705.4 417.7L727.2 422.0L744.7 427.5L768 432.0L768 469L744 468L722 464L708 457L696 445L682 435L666 432L650 436L636 444L622 449L613 450L606 444L594 434L576 425L564 418L558 410Z" fill="#3fbe2c" filter="url(#b3)"/><path d="M700 440L730 436L768 440L768 466L730 464Z" fill="#58c230" filter="url(#b3)"/><path d="M610 420L640 430L660 428L650 440L620 446Z" fill="#23a040" filter="url(#b3)" opacity=".8"/><path d="M574 395L598 392L620 393.5L640 398L654 403L668 406L690 413L712 420L736 426L748 434L740 440L722 438L700 434L676 424L652 416L634 411L612 409L598 416L588 424L580 414L572 404Z" fill="#3ccfd6" filter="url(#b2)"/><path d="M586 398L612 395L628 399L608 405L598 418L589 422L584 408Z" fill="#62d6f0" filter="url(#b2)"/><path d="M694 422L720 428L734 436L716 438L698 432Z" fill="#5ad4e8" filter="url(#b2)"/><path d="M664 404.6L690 411.6L712 418.6L730 424L726 430L702 426.4L680 419.6L664 411Z" fill="#1f58d8" filter="url(#b2)"/><path d="M572 394L584 392.6L581 399L572 402Z" fill="#2a6ae0" filter="url(#b2)"/><path d="M730 430L743 428L747 437L737 441Z" fill="#2a5ad6" filter="url(#b2)"/><path d="M636 396.5L654 402.4L652 406L636 401Z" fill="#3a7ae0" filter="url(#b2)"/><path d="M576 392.6L598 390.4L618 391.6L637 396L653 401.6L662 402L684 409.4L705 416L727 420.4L745 426L768 430.4" stroke="#4a3a14" stroke-width="2" fill="none" opacity=".7" filter="url(#b1)"/><path d="M636 393.6L662 399L684 406L706 412.6L728 417L768 425" stroke="#b8601a" stroke-width="2" fill="none" opacity=".75" filter="url(#b1)"/><path d="M584 401Q596 398 608 404Q622 412 634 420Q646 428 660 424" stroke="#14703a" stroke-width="2.4" fill="none" opacity=".6" filter="url(#b2)"/><path d="M584 401Q596 398 608 404Q622 412 634 420Q646 428 660 424" stroke="#0f5a30" stroke-width="1" fill="none" opacity=".6" filter="url(#b1)"/><path d="M640 424Q652 430 664 423Q670 418 680 420" stroke="#14603a" stroke-width="1.6" fill="none" opacity=".6" filter="url(#b1)"/><path d="M584 400Q580 412 578 424M604 410Q612 426 622 444M700 428Q706 442 716 452M744 434Q752 446 766 454M726 436Q730 448 740 456" stroke="#1f7a2a" stroke-width="2.2" fill="none" opacity=".4" filter="url(#b2)"/><path d="M598 448L606 456M690 452L700 462M756 458L766 468" stroke="#7a6a10" stroke-width="2" fill="none" opacity=".4" filter="url(#b2)"/><path d="M528 384L600 380M530 404L552 400M530 432L560 440M540 456L600 462M528 470L640 474" stroke="#8a1a0c" stroke-width="2.4" fill="none" opacity=".28" filter="url(#b2)"/><path d="M690 386L762 390M700 378L750 380" stroke="#9a6a14" stroke-width="2.4" fill="none" opacity=".3" filter="url(#b2)"/><rect x="566" y="446.2" width="3.4" height="2.4" fill="#e8902a" filter="url(#b1)"/></g><path d="M526 370.7H766M526 477.4H766" stroke="#3a3ab8" stroke-width="0.6" opacity=".8"/><defs><linearGradient id="gstrip" x1="0" y1="0" x2="0" y2="1"><stop offset="0" stop-color="#b27a60"/><stop offset="1" stop-color="#8c6c5e"/></linearGradient></defs><rect x="526" y="477.6" width="240" height="6.6" fill="url(#gstrip)"/><rect x="526" y="484.2" width="240" height="27.6" fill="#575a59"/><path d="M565.2 483.6V476.4" stroke="#2a4ad0" stroke-width="0.8"/><path d="M565.2 483.8L575 481.2" stroke="#c82828" stroke-width="0.8"/><path d="M565.2 483.6L562.4 478" stroke="#30a040" stroke-width="0.8"/><circle cx="565.6" cy="475.4" r="1" fill="#fff"/><circle cx="577" cy="480.4" r="1" fill="#fff"/><circle cx="562" cy="477.4" r="0.9" fill="#3a3"/><path d="M555 467.6v4M556.6 470v3.4" stroke="#e8902a" stroke-width="0.8"/></svg>
<div style="left:439.6px;top:513px;width:425px;height:9px;background:#d5d8dd;border-top:0.5px solid #b8bcc4;"></div>
<div style="left:473.8px;top:514px;width:0.5px;height:7px;background:#aaa;"></div>
<span class="t" style="left:475.6px;top:517.6px;color:#444;font-size:5px;letter-spacing:0.5px;">模式<i class="l">:</i> 选点</span>
<div style="left:583.5px;top:514px;width:0.5px;height:7px;background:#aaa;"></div>
<span class="t" style="left:585.7px;top:517.6px;color:#444;font-size:5px;letter-spacing:0.35px;">坐标<i class="l">: -54.241, 40.458, -1.946</i></span>
<div style="left:840.5px;top:514px;width:0.5px;height:7px;background:#aaa;"></div>
<span class="t" style="left:842px;top:517.6px;color:#444;font-size:5px;letter-spacing:0.5px;">单位<i class="l">:</i> 米</span>
<div style="left:761.8px;top:329.6px;width:110px;height:186.2px;background:rgba(60,70,90,.2);filter:blur(1.2px);"></div>
<div style="left:763.5px;top:330.4px;width:106px;height:184.4px;background:#fff;border:0.6px solid #6a6e76;"></div>
<span class="t" style="left:765px;top:334.8px;font-size:4.4px;color:#222;">创建计算三角网<i class="l">(?)</i></span>
<div style="left:766px;top:350.6px;width:104px;height:0.5px;background:#d0d0d0;"></div>
<span class="t" style="left:769px;top:347px;font-size:4px;color:#222;">设置边界</span>
<span class="t" style="left:787.4px;top:347px;font-size:4px;color:#222;">设置参考面</span>
<div style="left:807.8px;top:343.2px;width:19.6px;height:8px;background:#fff;border:0.5px solid #c4c4c4;border-bottom:none;"></div>
<span class="t" style="left:809.8px;top:347px;font-size:4px;color:#222;">计算结果</span>
<div style="left:777.2px;top:359.4px;width:95px;height:82px;border:0.5px solid #dcdcdc;"></div>
<div style="left:779.4px;top:357px;width:17px;height:5px;background:#fff;"></div>
<span class="t" style="left:780.3px;top:359.5px;font-size:3.9px;color:#222;">计算结果</span>
<div style="left:780.5px;top:366px;width:43.3px;height:9.4px;background:#e5f0fb;border:0.8px solid #2a78d0;"></div>
<span class="t c" style="left:802.2px;top:370.8px;font-size:4px;color:#222;font-weight:700;">计算结果</span>
<div style="left:830px;top:366px;width:40px;height:9.4px;background:#e1e1e1;border:0.5px solid #adadad;"></div>
<span class="t c" style="left:852px;top:370.8px;font-size:4px;color:#222;">平整面计算</span>
<span class="t" style="left:781px;top:383.9px;font-size:4px;color:#222;">高度<i class="l">:</i></span>
<div style="left:804px;top:379.09999999999997px;width:50.8px;height:9.5px;background:#fff;border:0.5px solid #ababab;"></div>
<span class="t" style="left:805.6px;top:382.5px;font-size:3.9px;color:#222;"><i class="l">0.8</i></span>
<span class="t" style="left:858.6px;top:383.9px;font-size:4px;color:#222;">吨<i class="l">/</i>立</span>
<span class="t" style="left:781px;top:396.52px;font-size:4px;color:#222;">填方<i class="l">:</i></span>
<div style="left:804px;top:391.71999999999997px;width:50.8px;height:9.5px;background:#fff;border:0.5px solid #ababab;"></div>
<span class="t" style="left:805.6px;top:395.12px;font-size:3.9px;color:#222;"><i class="l">0.00</i></span>
<span class="t" style="left:858.6px;top:396.52px;font-size:4px;color:#222;">立方</span>
<span class="t" style="left:781px;top:409.14px;font-size:4px;color:#222;">挖方<i class="l">:</i></span>
<div style="left:804px;top:404.34px;width:50.8px;height:9.5px;background:#fff;border:0.5px solid #ababab;"></div>
<span class="t" style="left:805.6px;top:407.74px;font-size:3.9px;color:#222;"><i class="l">1209.02</i></span>
<span class="t" style="left:858.6px;top:409.14px;font-size:4px;color:#222;">立方</span>
<span class="t" style="left:781px;top:421.76px;font-size:4px;color:#222;">投影面积<i class="l">:</i></span>
<div style="left:804px;top:416.96px;width:50.8px;height:9.5px;background:#fff;border:0.5px solid #ababab;"></div>
<span class="t" style="left:805.6px;top:420.36px;font-size:3.9px;color:#222;"><i class="l">2004.62</i></span>
<span class="t" style="left:858.6px;top:421.76px;font-size:4px;color:#222;">平方</span>
<span class="t" style="left:781px;top:434.38px;font-size:4px;color:#222;">面平体量<i class="l">:</i></span>
<div style="left:804px;top:429.58px;width:50.8px;height:9.5px;background:#fff;border:0.5px solid #ababab;"></div>
<span class="t" style="left:805.6px;top:432.98px;font-size:3.9px;color:#222;"><i class="l">0</i></span>
<span class="t" style="left:858.6px;top:434.38px;font-size:4px;color:#222;">米</span>
<div style="left:777.2px;top:450.7px;width:95px;height:32.6px;border:0.5px solid #dcdcdc;"></div>
<div style="left:779.4px;top:448.2px;width:17px;height:5px;background:#fff;"></div>
<span class="t" style="left:780.3px;top:450.8px;font-size:3.9px;color:#222;">保存结果</span>
<div style="left:782.3px;top:457px;width:90px;height:9.5px;background:#e1e1e1;border:0.5px solid #adadad;"></div>
<span class="t c" style="left:826px;top:461.8px;font-size:4px;color:#222;">生成结果</span></div></div>
<div class="cap" style="left:4.8px;top:235.6px;width:427px;">Si-Slam</div>
<div class="cap" style="left:439.6px;top:235.6px;width:427px;">Si-Slam</div>
<div class="cap" style="left:15.3px;top:531.7px;width:427px;">Si-Scan点云处理软件</div>
<div class="cap" style="left:439.4px;top:531.7px;width:427px;">Si-Scan点云处理软件</div>
</body></html>
